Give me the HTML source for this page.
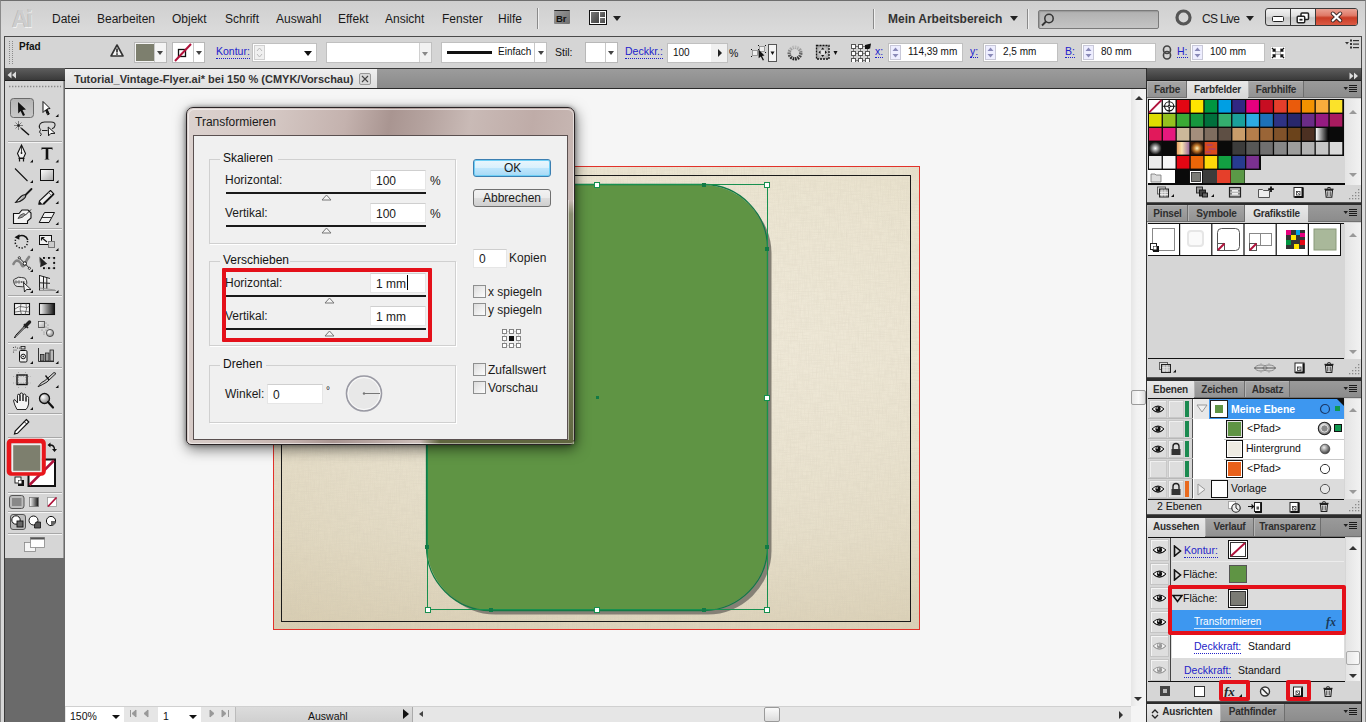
<!DOCTYPE html>
<html><head><meta charset="utf-8">
<style>
*{margin:0;padding:0;box-sizing:border-box}
html,body{width:1366px;height:722px;overflow:hidden;background:#d8d8d8;font-family:"Liberation Sans",sans-serif;font-size:12px;color:#1a1a1a}
.a{position:absolute}
.t{position:absolute;white-space:nowrap;line-height:1}
</style></head><body>
<!-- window frame -->
<div class="a" style="left:0;top:0;width:1366px;height:722px;background:linear-gradient(#cfcfcf,#dadada 30px,#d6d6d6);border-top:1px solid #6e6e6e;border-left:1px solid #8a8a8a;border-right:1px solid #8a8a8a"></div>

<!-- MENUBAR -->
<div id="menubar">
<div class="t" style="left:12px;top:6px;font:bold 23px 'Liberation Sans';color:#cdcdcd;letter-spacing:-2px;text-shadow:-0.5px -0.5px 0 #b0b0b0,0.5px 0.5px 0 #f2f2f2">Ai</div>
<div class="t" style="left:52px;top:13px">Datei</div>
<div class="t" style="left:97px;top:13px">Bearbeiten</div>
<div class="t" style="left:172px;top:13px">Objekt</div>
<div class="t" style="left:225px;top:13px">Schrift</div>
<div class="t" style="left:276px;top:13px">Auswahl</div>
<div class="t" style="left:338px;top:13px">Effekt</div>
<div class="t" style="left:385px;top:13px">Ansicht</div>
<div class="t" style="left:442px;top:13px">Fenster</div>
<div class="t" style="left:498px;top:13px">Hilfe</div>
<div class="a" style="left:537px;top:8px;width:1px;height:21px;background:#8a8a8a;box-shadow:1px 0 0 #f0f0f0"></div>
<div class="a" style="left:554px;top:10px;width:16px;height:14px;background:linear-gradient(135deg,#9a9a9a,#6e6e6e);border-top:1px solid #222;border-radius:1px"></div>
<div class="t" style="left:556px;top:13px;font:bold 9.5px 'Liberation Sans';color:#111">Br</div>
<svg class="a" style="left:589px;top:10px" width="18" height="15"><rect x="0.5" y="0.5" width="17" height="14" fill="#fff" stroke="#111"/><defs><linearGradient id="lyg" x1="0" y1="0" x2="1" y2="1"><stop offset="0" stop-color="#777"/><stop offset="1" stop-color="#444"/></linearGradient></defs><rect x="2" y="2" width="8" height="11" fill="url(#lyg)"/><rect x="11" y="2" width="5" height="5" fill="url(#lyg)"/><rect x="11" y="8" width="5" height="5" fill="url(#lyg)"/></svg>
<div class="a" style="left:613px;top:16px;width:0;height:0;border-left:4px solid transparent;border-right:4px solid transparent;border-top:5px solid #222"></div>
<div class="a" style="left:873px;top:9px;width:1px;height:20px;background:#8a8a8a;box-shadow:1px 0 0 #f0f0f0"></div>
<div class="t" style="left:888px;top:13px;font-weight:bold;color:#333">Mein Arbeitsbereich</div>
<div class="a" style="left:1010px;top:16px;width:0;height:0;border-left:4px solid transparent;border-right:4px solid transparent;border-top:5px solid #222"></div>
<div class="a" style="left:1027px;top:9px;width:1px;height:20px;background:#8a8a8a;box-shadow:1px 0 0 #f0f0f0"></div>
<div class="a" style="left:1038px;top:10px;width:121px;height:19px;background:linear-gradient(#b0b0b0,#c4c4c4);border:1px solid #7a7a7a;border-radius:2px;box-shadow:inset 1px 1px 1px #999"></div>
<svg class="a" style="left:1040px;top:12px" width="16" height="15"><circle cx="9" cy="6.5" r="4.2" fill="none" stroke="#333" stroke-width="1.5"/><line x1="6" y1="9.5" x2="2" y2="13.5" stroke="#333" stroke-width="1.8"/></svg>
<svg class="a" style="left:1175px;top:9px" width="17" height="17"><circle cx="8.5" cy="8.5" r="6.5" fill="none" stroke="#555" stroke-width="3.2"/></svg>
<div class="t" style="left:1202px;top:13px;color:#222;letter-spacing:-0.7px">CS Live</div>
<div class="a" style="left:1246px;top:16px;width:0;height:0;border-left:4px solid transparent;border-right:4px solid transparent;border-top:5px solid #222"></div>
<div class="a" style="left:1265px;top:8px;width:93px;height:18px;border:1px solid #3a3a3a;border-radius:3px;background:linear-gradient(#f2f2f2,#dedede 45%,#c6c6c6 55%,#d8d8d8);overflow:hidden">
 <div class="a" style="left:24px;top:0;width:1px;height:16px;background:#3a3a3a"></div>
 <div class="a" style="left:49px;top:0;width:43px;height:16px;background:linear-gradient(#eaa193,#e07a68 40%,#c93d26 55%,#dc5a44);border-left:1px solid #3a3a3a"></div>
</div>
<div class="a" style="left:1272px;top:16px;width:12px;height:6px;background:#fff;border:1.5px solid #222;border-radius:1.5px"></div>
<svg class="a" style="left:1296px;top:12px" width="14" height="12"><rect x="5" y="1" width="7.5" height="6.5" rx="1" fill="#fff" stroke="#222" stroke-width="1.5"/><rect x="1.2" y="4.2" width="7.5" height="6.5" rx="1" fill="#fff" stroke="#222" stroke-width="1.5"/><rect x="3.5" y="6.8" width="3" height="1.8" fill="#222"/></svg>
<svg class="a" style="left:1329px;top:11px" width="15" height="12"><path d="M3.8 2.5 L11.2 9.5 M11.2 2.5 L3.8 9.5" stroke="#3a2a28" stroke-width="4" stroke-linecap="round"/><path d="M3.8 2.5 L11.2 9.5 M11.2 2.5 L3.8 9.5" stroke="#fff" stroke-width="2.2" stroke-linecap="round"/></svg>
</div>

<!-- CONTROL BAR -->
<div class="a" style="left:4px;top:36px;width:1358px;height:33px;background:#d5d5d5;border-top:1px solid #4a4a4a;border-left:1px solid #4a4a4a;border-right:1px solid #4a4a4a;border-bottom:1px solid #7a7a7a"></div>
<div id="ctrl">
<svg class="a" style="left:8px;top:41px" width="6" height="24"><path d="M1.5 0 V23 M4.5 0 V23" stroke="#8a8a8a" stroke-width="1" stroke-dasharray="1 1"/></svg>
<div class="t" style="left:19px;top:41px;font:bold 10px 'Liberation Sans';color:#111">Pfad</div>
<svg class="a" style="left:110px;top:44px" width="14" height="13"><path d="M7 1 L13 12 L1 12 Z" fill="#f4f4f4" stroke="#333" stroke-width="1.6" stroke-linejoin="round"/><rect x="6.2" y="4.5" width="1.6" height="4" fill="#222"/><rect x="6.2" y="9.3" width="1.6" height="1.5" fill="#222"/></svg>
<div class="a" style="left:134px;top:42px;width:33px;height:21px;background:#f4f4f4;border:1px solid #b8b8b8"></div>
<div class="a" style="left:136px;top:44px;width:18px;height:17px;background:#7d7f6e"></div>
<div class="a" style="left:154px;top:43px;width:1px;height:19px;background:#c8c8c8"></div>
<div class="a" style="left:157px;top:51px;width:0;height:0;border-left:3.5px solid transparent;border-right:3.5px solid transparent;border-top:4px solid #444"></div>
<div class="a" style="left:172px;top:42px;width:33px;height:21px;background:#fff;border:1px solid #b8b8b8"></div>
<svg class="a" style="left:173px;top:43px" width="20" height="19"><rect x="5.5" y="6.5" width="7" height="7" fill="none" stroke="#111" stroke-width="1.3"/><line x1="2" y1="18" x2="18" y2="1" stroke="#b0123b" stroke-width="2"/></svg>
<div class="a" style="left:193px;top:43px;width:1px;height:19px;background:#c8c8c8"></div>
<div class="a" style="left:196px;top:51px;width:0;height:0;border-left:3.5px solid transparent;border-right:3.5px solid transparent;border-top:4px solid #444"></div>
<div class="t" style="left:216px;top:46px;font-size:10.5px;color:#2222cc;border-bottom:1px dotted #2222cc;padding-bottom:1px">Kontur:</div>
<div class="a" style="left:252px;top:43px;width:65px;height:19px;background:#fff;border:1px solid #c0c0c0"></div>
<svg class="a" style="left:254px;top:45px" width="12" height="15"><rect x="0.5" y="0.5" width="10" height="14" fill="#f0f0f0" stroke="#d0d0d0"/><path d="M3 6 L5.5 3 L8 6 M3 9 L5.5 12 L8 9" fill="none" stroke="#bbb"/></svg>
<div class="a" style="left:304px;top:51px;width:0;height:0;border-left:4.5px solid transparent;border-right:4.5px solid transparent;border-top:5px solid #111"></div>
<div class="a" style="left:326px;top:42px;width:106px;height:21px;background:#fff;border:1px solid #c0c0c0"></div>
<div class="a" style="left:419px;top:43px;width:1px;height:19px;background:#d0d0d0"></div>
<div class="a" style="left:420px;top:43px;width:11px;height:19px;background:#f2f2f2"></div>
<div class="a" style="left:422px;top:52px;width:0;height:0;border-left:3.5px solid transparent;border-right:3.5px solid transparent;border-top:4px solid #888"></div>
<div class="a" style="left:441px;top:42px;width:106px;height:21px;background:#fff;border:1px solid #c0c0c0"></div>
<div class="a" style="left:447px;top:51px;width:45px;height:3px;background:#111"></div>
<div class="t" style="left:498px;top:47px;font-size:10px;color:#111">Einfach</div>
<div class="a" style="left:534px;top:43px;width:1px;height:19px;background:#c8c8c8"></div>
<div class="a" style="left:538px;top:51px;width:0;height:0;border-left:3.5px solid transparent;border-right:3.5px solid transparent;border-top:4px solid #444"></div>
<div class="t" style="left:555px;top:47px;font-size:10.5px;color:#111">Stil:</div>
<div class="a" style="left:585px;top:42px;width:33px;height:21px;background:#fff;border:1px solid #b8b8b8"></div>
<div class="a" style="left:605px;top:43px;width:1px;height:19px;background:#c8c8c8"></div>
<div class="a" style="left:608px;top:51px;width:0;height:0;border-left:3.5px solid transparent;border-right:3.5px solid transparent;border-top:4px solid #444"></div>
<div class="t" style="left:625px;top:46px;font-size:10.5px;color:#2222cc;border-bottom:1px dotted #2222cc;padding-bottom:1px">Deckkr.:</div>
<div class="a" style="left:667px;top:43px;width:61px;height:20px;background:#fff;border:1px solid #c0c0c0"></div>
<div class="a" style="left:711px;top:44px;width:16px;height:18px;background:#f0f0f0"></div>
<div class="a" style="left:718px;top:49px;width:0;height:0;border-top:4px solid transparent;border-bottom:4px solid transparent;border-left:4px solid #222"></div>
<div class="t" style="left:673px;top:48px;font-size:10px;color:#111">100</div>
<div class="t" style="left:729px;top:48px;font-size:10.5px;color:#111">%</div>
<svg class="a" style="left:750px;top:43px" width="28" height="20"><g fill="#eee" stroke="#888" stroke-width="0.8"><rect x="2.5" y="7.5" width="5" height="5"/><rect x="9.5" y="3.5" width="5" height="5"/></g><g fill="#111"><rect x="1" y="6" width="1" height="1"/><rect x="8" y="6" width="1" height="1"/><rect x="1" y="13" width="1" height="1"/><rect x="8" y="2" width="1" height="1"/><rect x="15" y="2" width="1" height="1"/><rect x="15" y="9" width="1" height="1"/></g><path d="M8.5 6.5 L14.5 12.5 L12 13 L14 17 L12.8 17.6 L10.8 13.6 L8.7 15.3 Z" fill="#111"/><rect x="18.5" y="1.5" width="8" height="17" fill="#f4f4f4" stroke="#555"/><path d="M20.5 8.5 L24.5 8.5 L22.5 12 Z" fill="#111"/></svg>
<svg class="a" style="left:787px;top:45px" width="16" height="16"><defs><linearGradient id="rcg" x1="0" y1="0" x2="0" y2="1"><stop offset="0" stop-color="#bbb"/><stop offset="1" stop-color="#222"/></linearGradient></defs><circle cx="8" cy="8" r="5.8" fill="none" stroke="url(#rcg)" stroke-width="3.4" stroke-dasharray="1.6 0.8"/><circle cx="8" cy="8" r="3.6" fill="#d8d8d8"/></svg>
<svg class="a" style="left:815px;top:44px" width="24" height="17"><defs><radialGradient id="isg"><stop offset="0" stop-color="#eee"/><stop offset="1" stop-color="#aaa"/></radialGradient></defs><rect x="1.5" y="1.5" width="12.5" height="13.5" fill="url(#isg)" stroke="#111" stroke-width="1.3" stroke-dasharray="2 1"/><path d="M7.7 3.5 L6 5.5 H9.4 Z M7.7 13 L6 11 H9.4 Z M3.5 8.2 L5.5 6.5 V9.9 Z M12 8.2 L10 6.5 V9.9 Z" fill="#111"/><path d="M18.5 7 L22.5 7 L20.5 11 Z" fill="#111"/></svg>
<svg class="a" style="left:850px;top:43px" width="22" height="19"><path d="M3.5 3.5 H17.5 M3.5 10.5 H17.5 M3.5 17.5 H17.5 M3.5 3.5 V17.5 M10.5 3.5 V17.5 M17.5 3.5 V17.5" stroke="#777" stroke-width="1"/><g fill="#fff" stroke="#555" stroke-width="1"><rect x="1.5" y="1.5" width="4" height="4"/><rect x="8.5" y="1.5" width="4" height="4"/><rect x="1.5" y="8.5" width="4" height="4"/><rect x="8.5" y="8.5" width="4" height="4"/><rect x="15.5" y="8.5" width="4" height="4"/><rect x="1.5" y="15.5" width="4" height="4"/><rect x="8.5" y="15.5" width="4" height="4"/><rect x="15.5" y="15.5" width="4" height="4"/></g><path d="M15 2 L21 0.5 L20 6 Z" fill="#111"/><rect x="15" y="2" width="4" height="4" fill="#111"/></svg>
<div class="t" style="left:875px;top:46px;font-size:10.5px;color:#2222cc;border-bottom:1px dotted #2222cc">x:</div>
<div class="a" style="left:888px;top:43px;width:75px;height:19px;background:#fff;border:1px solid #c0c0c0"></div>
<svg class="a" style="left:890px;top:45px" width="12" height="15"><rect x="0.5" y="0.5" width="10" height="14" fill="#eef" stroke="#c8c8d8"/><path d="M2.5 6 L5.5 2.5 L8.5 6 Z M2.5 9 L5.5 12.5 L8.5 9 Z" fill="#8a8ab8"/></svg>
<div class="t" style="left:908px;top:47px;font-size:10px;color:#111">114,39 mm</div>
<div class="t" style="left:970px;top:46px;font-size:10.5px;color:#2222cc;border-bottom:1px dotted #2222cc">y:</div>
<div class="a" style="left:983px;top:43px;width:75px;height:19px;background:#fff;border:1px solid #c0c0c0"></div>
<svg class="a" style="left:985px;top:45px" width="12" height="15"><rect x="0.5" y="0.5" width="10" height="14" fill="#eef" stroke="#c8c8d8"/><path d="M2.5 6 L5.5 2.5 L8.5 6 Z M2.5 9 L5.5 12.5 L8.5 9 Z" fill="#8a8ab8"/></svg>
<div class="t" style="left:1003px;top:47px;font-size:10px;color:#111">2,5 mm</div>
<div class="t" style="left:1065px;top:46px;font-size:10.5px;color:#2222cc;border-bottom:1px dotted #2222cc">B:</div>
<div class="a" style="left:1081px;top:43px;width:75px;height:19px;background:#fff;border:1px solid #c0c0c0"></div>
<svg class="a" style="left:1083px;top:45px" width="12" height="15"><rect x="0.5" y="0.5" width="10" height="14" fill="#eef" stroke="#c8c8d8"/><path d="M2.5 6 L5.5 2.5 L8.5 6 Z M2.5 9 L5.5 12.5 L8.5 9 Z" fill="#8a8ab8"/></svg>
<div class="t" style="left:1101px;top:47px;font-size:10px;color:#111">80 mm</div>
<svg class="a" style="left:1162px;top:45px" width="10" height="15"><rect x="1.5" y="1" width="7" height="7.5" rx="3.5" fill="none" stroke="#444" stroke-width="1.6"/><rect x="1.5" y="6.5" width="7" height="7.5" rx="3.5" fill="none" stroke="#444" stroke-width="1.6"/></svg>
<div class="t" style="left:1177px;top:46px;font-size:10.5px;color:#2222cc;border-bottom:1px dotted #2222cc">H:</div>
<div class="a" style="left:1190px;top:43px;width:75px;height:19px;background:#fff;border:1px solid #c0c0c0"></div>
<svg class="a" style="left:1192px;top:45px" width="12" height="15"><rect x="0.5" y="0.5" width="10" height="14" fill="#eef" stroke="#c8c8d8"/><path d="M2.5 6 L5.5 2.5 L8.5 6 Z M2.5 9 L5.5 12.5 L8.5 9 Z" fill="#8a8ab8"/></svg>
<div class="t" style="left:1210px;top:47px;font-size:10px;color:#111">100 mm</div>
<svg class="a" style="left:1270px;top:46px" width="16" height="14"><rect x="0.5" y="0.5" width="15" height="13" fill="#fff" stroke="#d0d0d0"/><rect x="5.5" y="5.5" width="5" height="3" fill="#ddd" stroke="#aaa" stroke-width="0.8"/><path d="M2 2 L5 5 M5 2.5 V5 H2.5 M14 2 L11 5 M11 2.5 V5 H13.5 M2 12 L5 9 M5 11.5 V9 H2.5 M14 12 L11 9 M11 11.5 V9 H13.5" stroke="#111" stroke-width="1.3" fill="none"/></svg>
<svg class="a" style="left:1345px;top:39px" width="14" height="10"><path d="M0 3 L4 3 L2 5.5 Z" fill="#333"/><rect x="5" y="0.5" width="2" height="2" fill="#333"/><rect x="8" y="1" width="6" height="1.2" fill="#333"/><rect x="5" y="4" width="2" height="2" fill="#333"/><rect x="8" y="4.5" width="6" height="1.2" fill="#333"/><rect x="5" y="7.5" width="2" height="2" fill="#333"/><rect x="8" y="8" width="6" height="1.2" fill="#333"/></svg>
</div>

<!-- TOOLS PANEL -->
<div class="a" style="left:4px;top:68px;width:61px;height:654px;background:#6a6a6a;border-left:1px solid #3a3a3a"></div>
<div class="a" style="left:5px;top:68px;width:60px;height:13px;background:linear-gradient(#5e5e5e,#3a3a3a);border-bottom:1px solid #1e1e1e"></div>
<svg class="a" style="left:7px;top:71px" width="10" height="8"><path d="M4.5 0.5 L0.5 4 L4.5 7.5 Z M9 0.5 L5 4 L9 7.5 Z" fill="#ddd"/></svg>
<div class="a" style="left:5px;top:81px;width:59px;height:477px;background:#d6d6d6;border-right:1px solid #9a9a9a"></div>
<svg class="a" style="left:0;top:0" width="66" height="560">
<defs>
<linearGradient id="gsel" x1="0" y1="0" x2="0" y2="1"><stop offset="0" stop-color="#b4b4b4"/><stop offset="1" stop-color="#c9c9c9"/></linearGradient>
<linearGradient id="grect" x1="0" y1="0" x2="1" y2="1"><stop offset="0" stop-color="#fff"/><stop offset="1" stop-color="#a8a8a8"/></linearGradient>
<linearGradient id="ggrad" x1="0" y1="0" x2="1" y2="0"><stop offset="0" stop-color="#fff"/><stop offset="1" stop-color="#111"/></linearGradient>
<radialGradient id="gball" cx="0.35" cy="0.35" r="0.7"><stop offset="0" stop-color="#fff"/><stop offset="1" stop-color="#888"/></radialGradient>
</defs>

<path d="M9 86.5 H61" stroke="#8a8a8a" stroke-width="1.4" stroke-dasharray="1.4 1.6"/>

<!-- separators -->
<g stroke="#a8a8a8" stroke-width="1"><path d="M8 141.5 H62 M8 228.5 H62 M8 295.5 H62 M8 342.5 H62 M8 367.5 H62 M8 413.5 H62 M8 437.5 H62 M8 492.5 H62 M8 511.5 H62 M8 533.5 H62"/></g>
<g stroke="#f4f4f4" stroke-width="1"><path d="M8 142.5 H62 M8 229.5 H62 M8 296.5 H62 M8 343.5 H62 M8 368.5 H62 M8 414.5 H62 M8 438.5 H62 M8 493.5 H62 M8 512.5 H62 M8 534.5 H62"/></g>
<!-- corner triangles -->
<g fill="#111">
<path d="M58.5 114 L58.5 117 L55.5 117 Z"/>
<path d="M33 159.5 L33 162.5 L30 162.5 Z M58.5 159.5 L58.5 162.5 L55.5 162.5 Z"/>
<path d="M33 180 L33 183 L30 183 Z M58.5 180 L58.5 183 L55.5 183 Z"/>
<path d="M58.5 201 L58.5 204 L55.5 204 Z M58.5 222 L58.5 225 L55.5 225 Z"/>
<path d="M33 248 L33 251 L30 251 Z M58.5 248 L58.5 251 L55.5 251 Z"/>
<path d="M33 269 L33 272 L30 272 Z M33 290 L33 293 L30 293 Z M58.5 290 L58.5 293 L55.5 293 Z"/>
<path d="M33 336 L33 339 L30 339 Z M33 361 L33 364 L30 364 Z M58.5 361 L58.5 364 L55.5 364 Z"/>
<path d="M58.5 385 L58.5 388 L55.5 388 Z M33 407 L33 410 L30 410 Z"/>
</g>
<!-- selection tool selected -->
<rect x="10.5" y="98.5" width="23" height="19" rx="3" fill="url(#gsel)" stroke="#6a6a6a"/>
<path d="M18 102 L26 109.5 L22.5 110 L25 115 L23 116 L20.6 111 L18.2 113.5 Z" fill="#111"/>
<path d="M43 101.5 L50 108.5 L47 109 L49 114 L47.5 114.8 L45.5 110 L43 112.5 Z" fill="#fff" stroke="#111" stroke-width="1"/>
<path d="M46 109.5 L49 114.5" stroke="#111" stroke-width="1.8"/>
<!-- magic wand -->
<path d="M21 128 L29 135" stroke="#111" stroke-width="1.5"/>
<path d="M18.5 121 V130 M14 125.5 H23 M15.5 122.5 L21.5 128.5 M21.5 122.5 L15.5 128.5" stroke="#666" stroke-width="0.8"/>
<circle cx="18.5" cy="125.5" r="1.2" fill="#222"/>
<!-- lasso -->
<path d="M39.5 128 Q38.5 122.5 44.5 122 H51 Q55.5 122 55 125.5 Q54.6 128.2 52 128.8" fill="none" stroke="#222" stroke-width="1.1"/>
<path d="M39.5 128 Q41.5 129.5 40 131 Q38.5 132.5 40.8 133.2 Q42 134.5 40.2 136" fill="none" stroke="#222" stroke-width="1"/>
<path d="M42 130.5 H47.5" stroke="#222" stroke-width="1"/>
<path d="M48.2 127 L55 133.3 L50.8 133.5 L48.6 135.8 Z" fill="#fafafa" stroke="#111" stroke-width="1"/>
<!-- pen -->
<path d="M21.5 145 L25.5 153.5 L23.5 158 H19.5 L17.5 153.5 Z" fill="#f2f2f2" stroke="#111" stroke-width="1.1"/>
<path d="M21.5 146 V152" stroke="#111" stroke-width="0.8"/><circle cx="21.5" cy="153" r="0.9" fill="#111"/>
<path d="M18.5 158.5 H24.5 M19.5 158 V161.5 M23.5 158 V161.5" stroke="#111" stroke-width="1.2"/>
<!-- T -->
<path d="M41.5 147.5 H52.5 V150 L51.5 149 H48.3 V158.8 L49.8 159.6 H44.2 L45.7 158.8 V149 H42.5 L41.5 150 Z" fill="#111"/>
<!-- line -->
<path d="M15 168.5 L27.5 181" stroke="#111" stroke-width="1.1"/>
<!-- rect -->
<rect x="40.5" y="169.5" width="13" height="11" fill="url(#grect)" stroke="#111" stroke-width="1"/>
<!-- brush -->
<path d="M31.5 189 L24 196.5" stroke="#1a1a1a" stroke-width="1.8" stroke-linecap="round"/>
<path d="M25.5 195 Q23.5 194 21 196.5 Q17.5 200 15.5 202.5 Q19.5 202.5 23 199.5 Q26.5 197 25.5 195 Z" fill="#a8a8a8" stroke="#1a1a1a" stroke-width="1.1"/>
<path d="M22.5 197 Q20 199.5 18 201" stroke="#eee" stroke-width="0.8" fill="none"/>
<!-- pencil -->
<path d="M50.5 190.5 L53.8 193.8 L43.5 204 L38.8 204.2 L39.5 200.8 Z" fill="#ececec" stroke="#111" stroke-width="1.1" stroke-linejoin="round"/>
<path d="M53.8 193.8 L43.5 204" stroke="#111" stroke-width="1.8"/>
<path d="M39.5 200.8 L38.8 204.2 L42 204.1 Z" fill="#111"/>
<path d="M48.5 192.5 L51.8 195.8" stroke="#555" stroke-width="0.8"/>
<!-- blob brush -->
<path d="M13.5 213.5 H19 L22 210 H28 L31 213 V218 L27.5 221 V223.5 H13.5 Z" fill="#f2f2f2" stroke="#111" stroke-width="1.1"/>
<path d="M31 209.5 L25 215.5" stroke="#222" stroke-width="1"/>
<path d="M25.5 214.5 Q23 218 18 218.5 Q19.5 214.5 23.5 213.5 Z" fill="#999" stroke="#333" stroke-width="0.8"/>
<!-- eraser -->
<path d="M44.5 212.5 H54.5 L49 222.5 H39.2 Z" fill="#f0f0f0" stroke="#111" stroke-width="1"/>
<path d="M41.5 217.5 H52" stroke="#333"/>
<!-- rotate -->
<path d="M27.5 241 A6.2 6.2 0 1 1 16.5 238" fill="none" stroke="#111" stroke-width="1.5" stroke-dasharray="1.3 1.7"/>
<path d="M18 236.8 A6.2 6.2 0 0 1 27.8 240" fill="none" stroke="#111" stroke-width="1.5"/>
<path d="M14.5 237.2 L19.5 234.2 L19.3 239.8 Z" fill="#111"/>
<!-- scale -->
<rect x="39.5" y="235.5" width="12" height="9" fill="#f2f2f2" stroke="#111"/>
<rect x="48.5" y="241.5" width="6" height="6" fill="#ccc" stroke="#777"/>
<path d="M41.5 237.5 L47 242 M41.5 237.5 H44.5 M41.5 237.5 V240.5" stroke="#111" stroke-width="1.2"/>
<!-- warp -->
<path d="M13.5 264 Q15.5 259.5 18.5 261 Q21 262.5 22 265.5 Q23 267.5 25 264 Q27 259 29 257" fill="none" stroke="#7a7a7a" stroke-width="2.6" stroke-linecap="round" opacity="0.9"/>
<path d="M19.5 258 L30 268.8" stroke="#111" stroke-width="0.9"/>
<circle cx="19.3" cy="257.8" r="1.1" fill="#fff" stroke="#111" stroke-width="0.8"/>
<circle cx="24.8" cy="263.5" r="1.7" fill="#fff" stroke="#111" stroke-width="1"/>
<circle cx="29.4" cy="268.3" r="1.1" fill="#fff" stroke="#111" stroke-width="0.8"/>
<!-- free transform -->
<path d="M43.7 257.8 H54.2 V268.2 H43.7" fill="none" stroke="#777" stroke-width="0.6" stroke-dasharray="1 1"/>
<g fill="#111"><rect x="43" y="257" width="1.9" height="1.9"/><rect x="48" y="257" width="1.9" height="1.9"/><rect x="53.2" y="257" width="1.9" height="1.9"/><rect x="53.2" y="262" width="1.9" height="1.9"/><rect x="53.2" y="267.2" width="1.9" height="1.9"/><rect x="48" y="267.2" width="1.9" height="1.9"/><rect x="43" y="267.2" width="1.9" height="1.9"/></g>
<path d="M39.5 256.8 L47.2 263.8 L40.2 267.2 Z" fill="#222"/>
<path d="M39.5 256.8 L41 264 L40.2 267.2 Z" fill="#777"/>
<!-- symbol sprayer -->
<path d="M14 283 Q12.5 279 16 278.5 Q18 276.5 21.5 277.5 Q25.5 277 26.5 280.5 Q28 283.5 25 285.5 Q23 287.5 19 286.5 Q15 287 14 283 Z" fill="#e6e6e6" stroke="#222" stroke-width="0.9"/>
<g fill="#fff" stroke="#111" stroke-width="0.6"><circle cx="16" cy="282" r="1.1"/><circle cx="19" cy="282" r="1.1"/></g><g fill="#111"><circle cx="21.8" cy="282" r="0.8"/><circle cx="23.8" cy="282" r="0.8"/></g>
<path d="M23.5 282.5 L31 289.5 L26.5 289.5 L24.5 292 Z" fill="#f4f4f4" stroke="#111" stroke-width="0.9"/>
<!-- graph perspective grid -->
<defs><linearGradient id="pgg" x1="0" y1="0" x2="0" y2="1"><stop offset="0" stop-color="#fff"/><stop offset="1" stop-color="#ccc"/></linearGradient></defs>
<path d="M39.5 275.5 L50 278.5 V288 L39.5 290.5 Z" fill="url(#pgg)"/>
<path d="M39.5 275 V290.5 M43.5 276.3 V289.5 M46.8 277.3 V288.7 M39.5 275.5 L50 278.5 M39.5 282.8 L50 283.3" fill="none" stroke="#222" stroke-width="1"/>
<path d="M39.5 290.5 H56 M39.5 288 L55 290" stroke="#888" stroke-width="0.8"/>
<!-- mesh -->
<rect x="14.5" y="303.5" width="15" height="11" fill="#f4f4f4" stroke="#111" stroke-width="1.1"/>
<path d="M15 309 Q19 305 24 307 Q27 309 29.5 306 M21 303.5 Q19 309 21.5 314.5 M26 303.5 Q27.5 309 25 314.5 M15 312 Q22 310 29.5 312" fill="none" stroke="#555" stroke-width="0.8"/>
<!-- gradient -->
<rect x="39.5" y="303.5" width="15" height="11" fill="url(#ggrad)" stroke="#111" stroke-width="1.1"/>
<!-- eyedropper -->
<path d="M29.5 322 L25 326.5" stroke="#222" stroke-width="3.5" stroke-linecap="round"/>
<path d="M24 324 L28 328" stroke="#222" stroke-width="1.6"/>
<path d="M25.5 327 L16 336.5 L14.5 338 L15.5 335.5 L24.5 326 Z" fill="#f4f4f4" stroke="#111" stroke-width="1"/>
<!-- blend -->
<rect x="38.5" y="321.5" width="6" height="6" fill="url(#grect)" stroke="#444" stroke-width="0.8"/>
<g fill="#777"><circle cx="46" cy="323" r="0.6"/><circle cx="48" cy="325" r="0.6"/><circle cx="46" cy="327" r="0.6"/><circle cx="42" cy="330" r="0.6"/><circle cx="44" cy="332" r="0.6"/><circle cx="46" cy="330" r="0.6"/><circle cx="48" cy="328" r="0.6"/><circle cx="44" cy="334" r="0.6"/></g>
<circle cx="50" cy="333" r="3.6" fill="url(#gball)" stroke="#333" stroke-width="0.8"/>
<!-- spray -->
<g fill="#333"><circle cx="13.5" cy="347.5" r="0.6"/><circle cx="15.5" cy="347" r="0.6"/><circle cx="17.5" cy="348" r="0.6"/><circle cx="14" cy="350" r="0.6"/><circle cx="16" cy="350" r="0.6"/><circle cx="13.5" cy="352" r="0.6"/><circle cx="19.5" cy="348" r="0.6"/></g>
<rect x="21" y="346.5" width="4" height="2.5" fill="#ddd" stroke="#111" stroke-width="0.8"/>
<rect x="19.5" y="350.5" width="7.5" height="11.5" rx="1.2" fill="#eee" stroke="#111" stroke-width="1"/>
<circle cx="23.2" cy="356.5" r="2.3" fill="none" stroke="#111"/><circle cx="23.2" cy="356.5" r="0.8" fill="#111"/>
<!-- graph -->
<path d="M38.5 348 V361.5 H54" stroke="#222" fill="none" stroke-width="0.9"/>
<rect x="40.5" y="354.5" width="3.5" height="6.5" fill="#888" stroke="#222" stroke-width="0.8"/>
<rect x="45.5" y="353" width="3.5" height="8" fill="#999" stroke="#222" stroke-width="0.8"/>
<rect x="50" y="350" width="3.5" height="11" fill="#bbb" stroke="#222" stroke-width="0.8"/>
<!-- artboard -->
<rect x="17" y="375" width="10" height="9.5" fill="none" stroke="#111" stroke-width="1.4"/>
<path d="M13 376.5 H31 M13 383 H31 M18.5 372 V388 M25.5 372 V388" stroke="#888" stroke-width="0.6" stroke-dasharray="1 1.5"/>
<!-- slice -->
<path d="M56 373.5 L47 382 Q42 385 38 386.8 Q41 382 45 380.5 L54 372.5 Z" fill="#ccc" stroke="#222" stroke-width="1"/>
<path d="M45.5 375.5 L49 380" stroke="#111" stroke-width="1.3"/>
<!-- hand -->
<path d="M17 409.5 Q14.5 405 13.6 401 Q13.5 399.3 15 399.8 L17.5 403 V395.5 Q17.5 394 19 394.2 Q20 394.5 20 396 V401 V394 Q20.5 392.5 22 393 Q23 393.3 23 395 V401 V395 Q23.5 393.8 24.8 394 Q26 394.4 26 396 V401.5 V397.5 Q26.5 396 27.8 396.4 Q28.8 396.8 28.6 398.5 V404 Q28 407.5 26 409.5 Z" fill="#f4f4f4" stroke="#111" stroke-width="0.9"/>
<!-- zoom -->
<circle cx="44.5" cy="398.5" r="5" fill="url(#gball)" stroke="#111" stroke-width="1.3"/>
<path d="M48 402 L53 407.5" stroke="#111" stroke-width="2.2" stroke-linecap="round"/>
<!-- edit pencil -->
<path d="M26.3 419.5 L28.8 422 L17.5 433.3 L14.5 434 L15.2 431 Z" fill="#fff" stroke="#111" stroke-width="1.2"/>
<path d="M24.2 421.6 L26.7 424.1" stroke="#111" stroke-width="0.9"/>
<!-- fill/stroke -->
<rect x="28.5" y="459.5" width="26.5" height="26.5" fill="#fff" stroke="#111" stroke-width="2"/>
<path d="M29.5 485 L54 460.5" stroke="#b0123b" stroke-width="2.5"/>
<rect x="9" y="441" width="34.5" height="32.5" rx="2" fill="none" stroke="#e8161b" stroke-width="4.6"/>
<rect x="12.5" y="444.5" width="28.5" height="27" fill="#7d7f6e" stroke="#f0f0f0" stroke-width="1.4"/>
<path d="M50 445 Q54.5 445 54.5 449.5" fill="none" stroke="#111" stroke-width="1.3"/><path d="M47.5 445 L50.5 442.5 V447.5 Z M54.5 452 L52 449 H57 Z" fill="#111"/>
<rect x="15" y="477" width="6" height="6" fill="#fff" stroke="#111" stroke-width="0.9"/>
<rect x="18" y="480" width="6" height="6" fill="#111"/>
<rect x="18.5" y="480.5" width="3" height="3" fill="#fff"/>
<!-- color modes -->
<rect x="9.5" y="495.5" width="14.5" height="13" rx="2.5" fill="#bcbcbc" stroke="#555"/>
<rect x="12" y="498" width="9.5" height="8" fill="#888"/>
<rect x="29.5" y="497.5" width="9" height="9" fill="url(#ggrad)" stroke="#777" stroke-width="0.8"/>
<rect x="47.5" y="497.5" width="9" height="9" fill="#fff" stroke="#999" stroke-width="0.8"/>
<path d="M48 506.5 L56.5 497.5" stroke="#b0123b" stroke-width="1.8"/>
<!-- draw modes -->
<rect x="10.5" y="514.5" width="15" height="15" rx="2.5" fill="#bcbcbc" stroke="#555"/>
<circle cx="16" cy="520" r="4.2" fill="#fff" stroke="#111" stroke-width="1"/>
<rect x="17" y="521" width="6" height="6" fill="#666" stroke="#111" stroke-width="0.9"/>
<circle cx="33.5" cy="520.5" r="4.5" fill="#fff" stroke="#111" stroke-width="1"/>
<path d="M34.5 525 L36 522 H40.5 V528 H34.5 Z" fill="#555" stroke="#111" stroke-width="0.8"/>
<circle cx="51" cy="521" r="4.6" fill="#fff" stroke="#111" stroke-width="1"/>
<path d="M51 521 H55.5 A4.5 4.5 0 0 1 51 525.5 Z" fill="#666"/>
<!-- screen mode -->
<rect x="24.5" y="542.5" width="11" height="9" fill="#f6f6f6" stroke="#888" stroke-width="0.8"/>
<rect x="30.5" y="537.5" width="14" height="10" fill="#fff" stroke="#888" stroke-width="0.8"/>
<rect x="30.5" y="537.5" width="14" height="2" fill="#555"/>
</svg>

<!-- DOC TAB BAR -->
<div class="a" style="left:65px;top:68px;width:1082px;height:21px;background:linear-gradient(#9c9c9c,#8a8a8a);border-top:1px solid #3a3a3a;border-bottom:1px solid #2a2a2a"></div>
<div class="a" style="left:65px;top:69px;width:312px;height:19px;background:linear-gradient(#f0f0f0,#dedede)"></div>
<div class="t" style="left:74px;top:73px;font:bold 11px 'Liberation Sans';color:#333">Tutorial_Vintage-Flyer.ai* bei 150 % (CMYK/Vorschau)</div>
<svg class="a" style="left:359px;top:73px" width="12" height="12"><rect x="0.5" y="0.5" width="11" height="11" rx="1.5" fill="#d8d8d8" stroke="#999"/><path d="M3 3 L9 9 M9 3 L3 9" stroke="#444" stroke-width="1.1"/></svg>

<!-- CANVAS -->
<div class="a" style="left:65px;top:89px;width:1066px;height:617px;background:#f6f6f6"></div>
<!-- bleed + artboard -->
<div class="a" style="left:273px;top:166px;width:647px;height:464px;border:1px solid #e2322a;background:#e4dcc6"></div>
<div class="a" style="left:274px;top:167px;width:645px;height:462px;background:radial-gradient(ellipse 80% 85% at 62% 38%,rgba(245,240,226,0.55) 0%,rgba(240,234,218,0.25) 50%,rgba(200,185,150,0.18) 100%),linear-gradient(#e9e2cd,#ebe4d1 40%,#e4dcc6 80%,#dcd2b9)"></div>
<svg class="a" style="left:274px;top:167px;opacity:0.5" width="645" height="462"><defs><filter id="lin" x="0" y="0" width="100%" height="100%"><feTurbulence type="fractalNoise" baseFrequency="0.9 0.08" numOctaves="2" seed="3" result="n1"/><feColorMatrix in="n1" type="matrix" values="0 0 0 0 0.55  0 0 0 0 0.5  0 0 0 0 0.4  0 0 0 -1.6 1.0" result="c1"/><feTurbulence type="fractalNoise" baseFrequency="0.08 0.9" numOctaves="2" seed="7" result="n2"/><feColorMatrix in="n2" type="matrix" values="0 0 0 0 0.55  0 0 0 0 0.5  0 0 0 0 0.4  0 0 0 -1.6 1.0" result="c2"/><feMerge><feMergeNode in="c1"/><feMergeNode in="c2"/></feMerge></filter></defs><rect width="645" height="462" filter="url(#lin)" opacity="0.4"/></svg>
<div class="a" style="left:281px;top:175px;width:630px;height:447px;border:1px solid #1a1a1a"></div>
<!-- shape shadow + shape -->
<svg class="a" style="left:0;top:0" width="1131" height="706">
<rect x="431.5" y="189.5" width="340" height="425" rx="64" ry="64" fill="#858075"/>
<rect x="427" y="185" width="340" height="425" rx="64" ry="64" fill="#5f9444"/>
<path d="M491 610.5 H704 A64 64 0 0 0 767.5 546 V249 A64 64 0 0 0 704 184.5 H491 A64 64 0 0 0 426.5 249 V546 A64 64 0 0 0 491 610.5 Z" fill="none" stroke="#127a45" stroke-width="1.3"/>
<path d="M427.5 547 V184.5 H767.5 V609.5 H427.5 Z" fill="none" stroke="#17904f" stroke-width="1"/>
<g fill="#fff" stroke="#17904f" stroke-width="1"><rect x="425.5" y="182.5" width="5" height="5"/><rect x="594.5" y="182.5" width="5" height="5"/><rect x="764.5" y="182.5" width="5" height="5"/><rect x="764.5" y="395.5" width="5" height="5"/><rect x="764.5" y="607.5" width="5" height="5"/><rect x="594.5" y="607.5" width="5" height="5"/><rect x="425.5" y="607.5" width="5" height="5"/><rect x="425.5" y="395.5" width="5" height="5"/></g>
<g fill="#127a45"><rect x="702" y="183" width="4" height="4"/><rect x="765" y="247" width="4" height="4"/><rect x="765" y="545" width="4" height="4"/><rect x="702" y="608" width="4" height="4"/><rect x="489" y="608" width="4" height="4"/><rect x="425" y="545" width="4" height="4"/><rect x="596" y="396" width="3" height="3"/></g>
</svg>
<!-- v scrollbar -->
<div class="a" style="left:1131px;top:89px;width:15px;height:617px;background:linear-gradient(90deg,#e6e6e6,#f2f2f2 40%,#f4f4f4)"></div>
<div class="a" style="left:1135px;top:96px;width:0;height:0;border-left:4px solid transparent;border-right:4px solid transparent;border-bottom:4px solid #333"></div>
<div class="a" style="left:1134px;top:697px;width:0;height:0;border-left:4px solid transparent;border-right:4px solid transparent;border-top:4px solid #333"></div>
<div class="a" style="left:1131px;top:390px;width:15px;height:15px;background:linear-gradient(90deg,#e6e6e6,#fafafa 50%,#dcdcdc);border:1px solid #9a9a9a;border-radius:2px"></div>
<!-- status bar -->
<div class="a" style="left:65px;top:706px;width:1066px;height:16px;background:#e6e6e6;border-top:1px solid #d0d0d0"></div>
<div class="a" style="left:66px;top:707px;width:58px;height:15px;background:#fff"></div>
<div class="t" style="left:70px;top:711px;font-size:10.5px;color:#111">150%</div>
<div class="a" style="left:112px;top:715px;width:0;height:0;border-left:4px solid transparent;border-right:4px solid transparent;border-top:4px solid #111"></div>
<svg class="a" style="left:128px;top:708px" width="30" height="14"><path d="M2.5 2 V9 M8 2 L4 5.5 L8 9 Z M20 2 L16 5.5 L20 9 Z" stroke="#999" fill="#999"/></svg>
<div class="a" style="left:158px;top:707px;width:43px;height:15px;background:#fff"></div>
<div class="t" style="left:163px;top:711px;font-size:10.5px;color:#111">1</div>
<div class="a" style="left:189px;top:715px;width:0;height:0;border-left:4px solid transparent;border-right:4px solid transparent;border-top:4px solid #111"></div>
<svg class="a" style="left:206px;top:708px" width="26" height="14"><path d="M4 2 L8 5.5 L4 9 Z M16 2 L20 5.5 L16 9 Z M22.5 2 V9" stroke="#999" fill="#999"/></svg>
<div class="a" style="left:235px;top:707px;width:178px;height:15px;background:linear-gradient(#dcdcdc,#d0d0d0);border-left:1px solid #bbb;border-right:1px solid #aaa"></div>
<div class="t" style="left:308px;top:711px;font-size:10.5px;color:#111">Auswahl</div>
<div class="a" style="left:403px;top:709px;width:0;height:0;border-top:5px solid transparent;border-bottom:5px solid transparent;border-left:6px solid #111"></div>
<div class="a" style="left:419px;top:711px;width:0;height:0;border-top:3.5px solid transparent;border-bottom:3.5px solid transparent;border-right:4px solid #444"></div>
<div class="a" style="left:764px;top:707px;width:16px;height:15px;background:linear-gradient(#fafafa,#dcdcdc);border:1px solid #9a9a9a;border-radius:2px"></div>
<div class="a" style="left:1119px;top:711px;width:0;height:0;border-top:4px solid transparent;border-bottom:4px solid transparent;border-left:4px solid #333"></div>
<div class="a" style="left:1131px;top:706px;width:15px;height:16px;background:#f4f4f4"></div>

<!-- DIALOG -->
<div class="a" style="left:186px;top:107px;width:389px;height:338px;border-radius:7px 7px 5px 5px;box-shadow:1px 4px 14px rgba(0,0,0,0.55),0 0 4px rgba(0,0,0,0.4);background:linear-gradient(100deg,#dcd2cf 0%,#d4c7c3 20%,#c4b2ae 36%,#a99591 46%,#b5a39f 54%,#c9bab6 64%,#bfaca8 78%,#c8b8b4 90%,#bca9a4 100%);border:1.5px solid #2a2426"></div>
<div class="a" style="left:187.5px;top:108.5px;width:386px;height:335px;border-radius:6px 6px 4px 4px;border:1px solid rgba(255,255,255,0.55)"></div>
<div class="a" style="left:568px;top:200px;width:5.5px;height:243.5px;background:linear-gradient(rgba(130,136,104,0),rgba(130,136,104,0.9) 14px,#7c8262 50%,#60663f);box-shadow:inset 1px 0 0 rgba(255,255,255,0.5),inset -1px 0 0 rgba(255,255,255,0.45)"></div>
<div class="a" style="left:420px;top:440px;width:153.5px;height:3.5px;background:linear-gradient(90deg,rgba(96,102,63,0),#60663f 20px);border-radius:0 0 3px 0;box-shadow:inset 0 -1px 0 rgba(255,255,255,0.45)"></div>
<div class="t" style="left:195px;top:116px;font-size:12px;color:#1a1a1a">Transformieren</div>
<div class="a" style="left:193px;top:135px;width:375px;height:305px;background:#f0f0f0;border:1px solid #5a5050"></div>
<!-- groups -->
<div class="a" style="left:209px;top:159px;width:247px;height:85px;border:1px solid #d0d0d0;box-shadow:1px 1px 0 #fff"></div>
<div class="a" style="left:220px;top:154px;width:58px;height:10px;background:#f0f0f0"></div>
<div class="t" style="left:223px;top:152px;font-size:12px;color:#111">Skalieren</div>
<div class="t" style="left:225px;top:174px">Horizontal:</div>
<div class="a" style="left:370px;top:170px;width:56px;height:20px;background:#fff;border:1px solid #e6e6e6;border-top-color:#cfcfcf"></div>
<div class="t" style="left:376px;top:175px">100</div>
<div class="t" style="left:430px;top:175px">%</div>
<div class="a" style="left:226px;top:192px;width:200px;height:2px;background:#1a1a1a"></div>
<svg class="a" style="left:321px;top:194px" width="11" height="7"><path d="M1 6 L5.5 1 L10 6 Z" fill="#f4f4f4" stroke="#777"/></svg>
<div class="t" style="left:225px;top:207px">Vertikal:</div>
<div class="a" style="left:370px;top:203px;width:56px;height:20px;background:#fff;border:1px solid #e6e6e6;border-top-color:#cfcfcf"></div>
<div class="t" style="left:376px;top:208px">100</div>
<div class="t" style="left:430px;top:208px">%</div>
<div class="a" style="left:226px;top:225px;width:200px;height:2px;background:#1a1a1a"></div>
<svg class="a" style="left:321px;top:227px" width="11" height="7"><path d="M1 6 L5.5 1 L10 6 Z" fill="#f4f4f4" stroke="#777"/></svg>

<div class="a" style="left:209px;top:261px;width:247px;height:85px;border:1px solid #d0d0d0;box-shadow:1px 1px 0 #fff"></div>
<div class="a" style="left:220px;top:256px;width:70px;height:10px;background:#f0f0f0"></div>
<div class="t" style="left:223px;top:254px;font-size:12px;color:#111">Verschieben</div>
<div class="t" style="left:225px;top:277px">Horizontal:</div>
<div class="a" style="left:370px;top:273px;width:56px;height:20px;background:#fff;border:1px solid #e6e6e6;border-top-color:#cfcfcf"></div>
<div class="t" style="left:376px;top:278px">1 mm</div>
<div class="a" style="left:407px;top:275px;width:1px;height:15px;background:#000"></div>
<div class="a" style="left:226px;top:295px;width:200px;height:2px;background:#1a1a1a"></div>
<svg class="a" style="left:324px;top:297px" width="11" height="7"><path d="M1 6 L5.5 1 L10 6 Z" fill="#f4f4f4" stroke="#777"/></svg>
<div class="t" style="left:225px;top:310px">Vertikal:</div>
<div class="a" style="left:370px;top:306px;width:56px;height:20px;background:#fff;border:1px solid #e6e6e6;border-top-color:#cfcfcf"></div>
<div class="t" style="left:376px;top:311px">1 mm</div>
<div class="a" style="left:226px;top:328px;width:200px;height:2px;background:#1a1a1a"></div>
<svg class="a" style="left:324px;top:330px" width="11" height="7"><path d="M1 6 L5.5 1 L10 6 Z" fill="#f4f4f4" stroke="#777"/></svg>
<div class="a" style="left:222px;top:268px;width:210px;height:74px;border:4px solid #e4101a;border-radius:1px"></div>

<div class="a" style="left:209px;top:365px;width:247px;height:58px;border:1px solid #d0d0d0;box-shadow:1px 1px 0 #fff"></div>
<div class="a" style="left:220px;top:360px;width:46px;height:10px;background:#f0f0f0"></div>
<div class="t" style="left:223px;top:358px;font-size:12px;color:#111">Drehen</div>
<div class="t" style="left:225px;top:388px">Winkel:</div>
<div class="a" style="left:267px;top:384px;width:56px;height:20px;background:#fff;border:1px solid #e6e6e6;border-top-color:#cfcfcf"></div>
<div class="t" style="left:273px;top:389px">0</div>
<div class="t" style="left:326px;top:386px;font-size:10px">°</div>
<svg class="a" style="left:344px;top:374px" width="40" height="40"><circle cx="20" cy="19.5" r="17.5" fill="#e8e8e8" stroke="#9a9aa4" stroke-width="1.6"/><circle cx="20" cy="19.5" r="16" fill="none" stroke="#fafafa" stroke-width="1"/><path d="M20 19.5 H36" stroke="#777" stroke-width="1"/><circle cx="20" cy="19.5" r="1.2" fill="#777"/></svg>

<!-- buttons -->
<div class="a" style="left:473px;top:159px;width:78px;height:18px;border:1px solid #3c7fb1;border-radius:3px;background:linear-gradient(#eaf6fd,#d9f0fc 50%,#bee6fd 51%,#a7d9f5);box-shadow:inset 0 0 0 1px #6ecff6"></div>
<div class="t" style="left:504px;top:162px">OK</div>
<div class="a" style="left:473px;top:189px;width:78px;height:18px;border:1px solid #707070;border-radius:3px;background:linear-gradient(#f2f2f2,#ebebeb 50%,#dddddd 51%,#cfcfcf)"></div>
<div class="t" style="left:483px;top:192px">Abbrechen</div>
<div class="a" style="left:473px;top:249px;width:34px;height:19px;background:#fff;border:1px solid #e6e6e6;border-top-color:#cfcfcf"></div>
<div class="t" style="left:479px;top:253px">0</div>
<div class="t" style="left:509px;top:252px">Kopien</div>
<div class="a" style="left:473px;top:285px;width:13px;height:13px;border:1px solid #8e8f8f;background:linear-gradient(135deg,#dcdcdc,#fdfdfd)"></div>
<div class="t" style="left:488px;top:286px">x spiegeln</div>
<div class="a" style="left:473px;top:303px;width:13px;height:13px;border:1px solid #8e8f8f;background:linear-gradient(135deg,#dcdcdc,#fdfdfd)"></div>
<div class="t" style="left:488px;top:304px">y spiegeln</div>
<svg class="a" style="left:502px;top:329px" width="20" height="20"><g fill="#fff" stroke="#777" stroke-width="0.9"><rect x="0.5" y="0.5" width="4" height="4"/><rect x="7.5" y="0.5" width="4" height="4"/><rect x="14.5" y="0.5" width="4" height="4"/><rect x="0.5" y="7.5" width="4" height="4"/><rect x="14.5" y="7.5" width="4" height="4"/><rect x="0.5" y="14.5" width="4" height="4"/><rect x="7.5" y="14.5" width="4" height="4"/><rect x="14.5" y="14.5" width="4" height="4"/></g><rect x="7" y="7" width="5" height="5" fill="#111"/><path d="M4.5 2.5 H7.5 M11.5 2.5 H14.5 M2.5 4.5 V7.5 M2.5 11.5 V14.5 M16.5 4.5 V7.5 M16.5 11.5 V14.5 M4.5 16.5 H7.5 M11.5 16.5 H14.5" stroke="#999" stroke-width="0.8" stroke-dasharray="1 1"/></svg>
<div class="a" style="left:473px;top:363px;width:13px;height:13px;border:1px solid #8e8f8f;background:linear-gradient(135deg,#dcdcdc,#fdfdfd)"></div>
<div class="t" style="left:488px;top:364px">Zufallswert</div>
<div class="a" style="left:473px;top:381px;width:13px;height:13px;border:1px solid #8e8f8f;background:linear-gradient(135deg,#dcdcdc,#fdfdfd)"></div>
<div class="t" style="left:488px;top:382px">Vorschau</div>

<!-- RIGHT PANELS -->
<div class="a" style="left:1146px;top:68px;width:216px;height:654px;background:#d6d6d6;border-left:1px solid #2e2e2e;border-right:1px solid #2e2e2e"></div>
<div class="a" style="left:1147px;top:68px;width:214px;height:13px;background:linear-gradient(#5e5e5e,#3a3a3a);border-bottom:1px solid #1e1e1e"></div>
<svg class="a" style="left:1349px;top:72px" width="10" height="8"><path d="M0.5 0.5 L4.5 4 L0.5 7.5 Z M5 0.5 L9 4 L5 7.5 Z" fill="#ddd"/></svg>
<div class="a" style="left:1147px;top:81px;width:214px;height:17px;background:linear-gradient(#9a9a9a,#8c8c8c);border-bottom:1px solid #707070"></div>
<div class="a" style="left:1147px;top:81px;width:40px;height:16px;background:linear-gradient(#a6a6a6,#929292);border-right:1px solid #6e6e6e;box-shadow:inset 1px 1px 0 #b4b4b4"></div>
<div class="t" style="left:1147px;width:40px;text-align:center;top:84px;font:bold 10px 'Liberation Sans';color:#2e2e2e;letter-spacing:-0.2px">Farbe</div>
<div class="a" style="left:1187px;top:81px;width:61px;height:17px;background:linear-gradient(#e8e8e8,#d8d8d8)"></div>
<div class="t" style="left:1187px;width:61px;text-align:center;top:84px;font:bold 10px 'Liberation Sans';color:#2e2e2e;letter-spacing:-0.2px">Farbfelder</div>
<div class="a" style="left:1248px;top:81px;width:56px;height:16px;background:linear-gradient(#a6a6a6,#929292);border-right:1px solid #6e6e6e;box-shadow:inset 1px 1px 0 #b4b4b4"></div>
<div class="t" style="left:1248px;width:56px;text-align:center;top:84px;font:bold 10px 'Liberation Sans';color:#2e2e2e;letter-spacing:-0.2px">Farbhilfe</div>
<svg class="a" style="left:1343px;top:85px" width="15" height="10"><path d="M0.5 2 L5 2 L2.75 5 Z" fill="#222"/><g fill="#1a1a1a"><rect x="6" y="0" width="8" height="1"/><rect x="6" y="2" width="8" height="1"/><rect x="6" y="4" width="8" height="1"/><rect x="6" y="6" width="8" height="1"/></g></svg>
<div class="a" style="left:1147px;top:98px;width:214px;height:104px;background:#d6d6d6"></div>
<div class="a" style="left:1148px;top:99px;width:197px;height:86px;background:#d8d8d8;border-top:1px solid #111;border-bottom:2px solid #111"></div>
<svg class="a" style="left:1148px;top:99px" width="197" height="86"><defs><linearGradient id="sg1" x1="0" x2="1"><stop offset="0" stop-color="#fff"/><stop offset="1" stop-color="#000"/></linearGradient><linearGradient id="sg2" x1="0" x2="1"><stop offset="0" stop-color="#e9a060"/><stop offset="0.4" stop-color="#f8e2b0"/><stop offset="1" stop-color="#9a6a9e"/></linearGradient><radialGradient id="sr1"><stop offset="0" stop-color="#fff"/><stop offset="1" stop-color="#111"/></radialGradient><radialGradient id="sr2"><stop offset="0" stop-color="#fff3c0"/><stop offset="0.5" stop-color="#c0782a"/><stop offset="1" stop-color="#3a1a08"/></radialGradient></defs><rect x="0" y="0" width="197" height="85" fill="#d6d6d6"/><rect x="0" y="0" width="196" height="57" fill="#0a0a0a"/><rect x="0" y="56" width="113" height="15" fill="#0a0a0a"/><rect x="0" y="70" width="97" height="15" fill="#0a0a0a"/><rect x="1.0" y="1" width="12.6" height="12.6" fill="#fff"/><path d="M1.0 13.6 L13.6 1" stroke="#b0123b" stroke-width="1.8"/><rect x="14.9" y="1" width="12.6" height="12.6" fill="#fff"/><circle cx="21.2" cy="7.3" r="4.6" fill="none" stroke="#111" stroke-width="1.1"/><path d="M21.2 1 V13.6 M14.9 7.3 H27.5" stroke="#111" stroke-width="1.1"/><circle cx="21.2" cy="7.3" r="1.4" fill="#111"/><circle cx="21.2" cy="7.3" r="0.6" fill="#fff"/><rect x="28.8" y="1" width="12.6" height="12.6" fill="#e30613"/><rect x="42.7" y="1" width="12.6" height="12.6" fill="#ffe500"/><rect x="56.6" y="1" width="12.6" height="12.6" fill="#009640"/><rect x="70.5" y="1" width="12.6" height="12.6" fill="#009fe3"/><rect x="84.4" y="1" width="12.6" height="12.6" fill="#312783"/><rect x="98.3" y="1" width="12.6" height="12.6" fill="#e6007e"/><rect x="112.2" y="1" width="12.6" height="12.6" fill="#c70d22"/><rect x="126.10000000000001" y="1" width="12.6" height="12.6" fill="#e53e2b"/><rect x="140.0" y="1" width="12.6" height="12.6" fill="#ea5b0c"/><rect x="153.9" y="1" width="12.6" height="12.6" fill="#f39200"/><rect x="167.8" y="1" width="12.6" height="12.6" fill="#f8ad3c"/><rect x="181.70000000000002" y="1" width="12.6" height="12.6" fill="#fbe22a"/><rect x="1.0" y="15" width="12.6" height="12.6" fill="#dedc00"/><rect x="14.9" y="15" width="12.6" height="12.6" fill="#95c11f"/><rect x="28.8" y="15" width="12.6" height="12.6" fill="#3aaa35"/><rect x="42.7" y="15" width="12.6" height="12.6" fill="#16983e"/><rect x="56.6" y="15" width="12.6" height="12.6" fill="#00703c"/><rect x="70.5" y="15" width="12.6" height="12.6" fill="#34ae6e"/><rect x="84.4" y="15" width="12.6" height="12.6" fill="#1aa09a"/><rect x="98.3" y="15" width="12.6" height="12.6" fill="#2daae1"/><rect x="112.2" y="15" width="12.6" height="12.6" fill="#1d71b8"/><rect x="126.10000000000001" y="15" width="12.6" height="12.6" fill="#2e3284"/><rect x="140.0" y="15" width="12.6" height="12.6" fill="#28276b"/><rect x="153.9" y="15" width="12.6" height="12.6" fill="#6a2c87"/><rect x="167.8" y="15" width="12.6" height="12.6" fill="#951b81"/><rect x="181.70000000000002" y="15" width="12.6" height="12.6" fill="#a81b5f"/><rect x="1.0" y="29" width="12.6" height="12.6" fill="#e1195b"/><rect x="14.9" y="29" width="12.6" height="12.6" fill="#e5197e"/><rect x="28.8" y="29" width="12.6" height="12.6" fill="#cbb89a"/><rect x="42.7" y="29" width="12.6" height="12.6" fill="#a48e7c"/><rect x="56.6" y="29" width="12.6" height="12.6" fill="#7f6d5f"/><rect x="70.5" y="29" width="12.6" height="12.6" fill="#5e4f44"/><rect x="84.4" y="29" width="12.6" height="12.6" fill="#c99d6a"/><rect x="98.3" y="29" width="12.6" height="12.6" fill="#b47e4b"/><rect x="112.2" y="29" width="12.6" height="12.6" fill="#9a6537"/><rect x="126.10000000000001" y="29" width="12.6" height="12.6" fill="#80522a"/><rect x="140.0" y="29" width="12.6" height="12.6" fill="#6b431b"/><rect x="153.9" y="29" width="12.6" height="12.6" fill="#4c3022"/><rect x="167.8" y="29" width="12.6" height="12.6" fill="url(#sg1)"/><rect x="181.70000000000002" y="29" width="12.6" height="12.6" fill="#0a0a0a"/><rect x="1.0" y="43" width="12.6" height="12.6" fill="url(#sr1)"/><rect x="14.9" y="43" width="12.6" height="12.6" fill="#0a0a0a"/><rect x="28.8" y="43" width="12.6" height="12.6" fill="url(#sg2)"/><rect x="42.7" y="43" width="12.6" height="12.6" fill="url(#sr2)"/><rect x="56.6" y="43" width="12.6" height="12.6" fill="#d84a1e"/><path d="M58.6 46 h6 M60.6 50 h7 M57.6 53 h5" stroke="#9a3a8a" stroke-width="1.2"/><rect x="70.5" y="43" width="12.6" height="12.6" fill="#0a0a0a"/><rect x="84.4" y="43" width="12.6" height="12.6" fill="#3c3c3b"/><rect x="98.3" y="43" width="12.6" height="12.6" fill="#575756"/><rect x="112.2" y="43" width="12.6" height="12.6" fill="#706f6f"/><rect x="126.10000000000001" y="43" width="12.6" height="12.6" fill="#878787"/><rect x="140.0" y="43" width="12.6" height="12.6" fill="#9d9d9c"/><rect x="153.9" y="43" width="12.6" height="12.6" fill="#b2b2b2"/><rect x="167.8" y="43" width="12.6" height="12.6" fill="#c6c6c6"/><rect x="181.70000000000002" y="43" width="12.6" height="12.6" fill="#dadada"/><rect x="1.0" y="57" width="12.6" height="12.6" fill="#ececec"/><rect x="14.9" y="57" width="12.6" height="12.6" fill="#f6f6f6"/><rect x="28.8" y="57" width="12.6" height="12.6" fill="#e30613"/><rect x="42.7" y="57" width="12.6" height="12.6" fill="#ec6608"/><rect x="56.6" y="57" width="12.6" height="12.6" fill="#fcd90a"/><rect x="70.5" y="57" width="12.6" height="12.6" fill="#12a042"/><rect x="84.4" y="57" width="12.6" height="12.6" fill="#273b8f"/><rect x="98.3" y="57" width="12.6" height="12.6" fill="#7b3190"/><rect x="0" y="71" width="27" height="14" fill="#fff"/><path d="M3 75 H7 L8 76 H13 V83 H3 Z" fill="#ddd" stroke="#777" stroke-width="0.8"/><rect x="27" y="71" width="14" height="14" fill="#0a0a0a"/><rect x="41.5" y="71.5" width="13" height="13" fill="#fff" stroke="#111"/><rect x="43.5" y="73.5" width="9" height="9" fill="#7b7b76" stroke="#222" stroke-width="0.8"/><rect x="55" y="71" width="14" height="14" fill="#3c3c3b"/><rect x="69" y="71" width="13.5" height="14" fill="#e53f2a"/><rect x="83" y="71" width="13.5" height="14" fill="#5b9947"/><rect x="0" y="84" width="197" height="2" fill="#0a0a0a"/></svg>
<div class="a" style="left:1345px;top:99px;width:16px;height:86px;background:linear-gradient(90deg,#e4e4e4,#f2f2f2)"></div>
<div class="a" style="left:1349px;top:110px;width:0;height:0;border-left:4px solid transparent;border-right:4px solid transparent;border-bottom:4px solid #999"></div>
<div class="a" style="left:1349px;top:173px;width:0;height:0;border-left:4px solid transparent;border-right:4px solid transparent;border-top:4px solid #999"></div>
<svg class="a" style="left:1147px;top:185px" width="214" height="17"><g transform="translate(10,1.5)"><rect x="0.5" y="0.5" width="8" height="7" fill="#ddd" stroke="#555" stroke-width="0.9"/><rect x="2.5" y="2.5" width="9" height="8" fill="#aaa" stroke="#222" stroke-width="1"/><path d="M5 3 V10 M8 3 V10 M3 5.8 H11 M3 8 H11" stroke="#eee" stroke-width="0.9"/><path d="M14 10.5 L17 7.5 V10.5 Z" fill="#111"/></g><g transform="translate(49,1.5)"><rect x="0.5" y="0.5" width="6" height="6" fill="#999" stroke="#222" stroke-width="0.9"/><rect x="3.5" y="3.5" width="6" height="6" fill="#444" stroke="#111" stroke-width="0.9"/><rect x="6.5" y="6.5" width="5" height="4" fill="#666" stroke="#111" stroke-width="0.9"/><path d="M15 10.5 L18 7.5 V10.5 Z" fill="#111"/></g><g transform="translate(82,2)"><rect x="0.5" y="0.5" width="11" height="9.5" fill="#bbb" stroke="#222" stroke-width="1.2"/><path d="M3 3.8 H9 M3 6.8 H9" stroke="#fff" stroke-width="1.2"/><path d="M1.5 3.8 H2.5 M9.5 3.8 H10.5 M1.5 6.8 H2.5 M9.5 6.8 H10.5" stroke="#222" stroke-width="1"/></g><g transform="translate(111,1)"><path d="M0.5 3.5 H4.5 L5.5 4.5 H11.5 V11.5 H0.5 Z" fill="#eee" stroke="#444" stroke-width="0.9"/><path d="M13 0.5 V6 M10.2 3.2 H15.8" stroke="#111" stroke-width="1.8"/></g><g transform="translate(146.5,2)"><rect x="0.5" y="0.5" width="9" height="9.5" fill="#fff" stroke="#222" stroke-width="1"/><path d="M9 1 V10 H1" fill="none" stroke="#111" stroke-width="2"/><rect x="3" y="4.5" width="3.5" height="3.5" fill="#fff" stroke="#333" stroke-width="0.8"/><path d="M3 4.5 L6.5 8" stroke="#333" stroke-width="0.7"/></g><g transform="translate(177,1.8)"><path d="M1.5 3.5 H8.5 L7.8 10.5 H2.2 Z" fill="#e8e8e8" stroke="#222" stroke-width="1.1"/><path d="M0.5 2.5 H9.5" stroke="#222" stroke-width="1.4"/><path d="M3 1.5 Q5 -0.5 7 1.5" fill="none" stroke="#222" stroke-width="1"/><path d="M3.8 4.5 V9.5 M6.2 4.5 V9.5" stroke="#222" stroke-width="0.9"/></g><g fill="#8a8a8a"><rect x="211" y="13" width="1.3" height="1.3"/><rect x="208" y="13" width="1.3" height="1.3"/><rect x="205" y="13" width="1.3" height="1.3"/><rect x="202" y="13" width="1.3" height="1.3"/><rect x="211" y="10" width="1.3" height="1.3"/><rect x="208" y="10" width="1.3" height="1.3"/><rect x="205" y="10" width="1.3" height="1.3"/><rect x="211" y="7" width="1.3" height="1.3"/><rect x="208" y="7" width="1.3" height="1.3"/><rect x="211" y="4" width="1.3" height="1.3"/></g></svg>
<div class="a" style="left:1147px;top:202px;width:214px;height:3px;background:#2c2c2c;border-top:1px solid #555"></div>
<div class="a" style="left:1147px;top:205px;width:214px;height:17px;background:linear-gradient(#9a9a9a,#8c8c8c);border-bottom:1px solid #707070"></div>
<div class="a" style="left:1147px;top:205px;width:41px;height:16px;background:linear-gradient(#a6a6a6,#929292);border-right:1px solid #6e6e6e;box-shadow:inset 1px 1px 0 #b4b4b4"></div>
<div class="t" style="left:1147px;width:41px;text-align:center;top:208px;font:bold 10px 'Liberation Sans';color:#2e2e2e;letter-spacing:-0.2px">Pinsel</div>
<div class="a" style="left:1188px;top:205px;width:57px;height:16px;background:linear-gradient(#a6a6a6,#929292);border-right:1px solid #6e6e6e;box-shadow:inset 1px 1px 0 #b4b4b4"></div>
<div class="t" style="left:1188px;width:57px;text-align:center;top:208px;font:bold 10px 'Liberation Sans';color:#2e2e2e;letter-spacing:-0.2px">Symbole</div>
<div class="a" style="left:1245px;top:205px;width:63px;height:17px;background:linear-gradient(#e8e8e8,#d8d8d8)"></div>
<div class="t" style="left:1245px;width:63px;text-align:center;top:208px;font:bold 10px 'Liberation Sans';color:#2e2e2e;letter-spacing:-0.2px">Grafikstile</div>
<svg class="a" style="left:1343px;top:209px" width="15" height="10"><path d="M0.5 2 L5 2 L2.75 5 Z" fill="#222"/><g fill="#1a1a1a"><rect x="6" y="0" width="8" height="1"/><rect x="6" y="2" width="8" height="1"/><rect x="6" y="4" width="8" height="1"/><rect x="6" y="6" width="8" height="1"/></g></svg>
<div class="a" style="left:1147px;top:222px;width:214px;height:155px;background:#d6d6d6"></div>
<div class="a" style="left:1148px;top:223px;width:196px;height:136px;background:#d6d6d6;border-top:1px solid #111;border-bottom:1px solid #111"></div>
<svg class="a" style="left:1148px;top:223px" width="194" height="34">
<rect x="0" y="0" width="193" height="33" fill="#111"/>
<g fill="#fff"><rect x="0" y="1" width="31" height="31"/><rect x="32.2" y="1" width="31" height="31"/><rect x="64.4" y="1" width="31" height="31"/><rect x="96.6" y="1" width="31" height="31"/><rect x="128.8" y="1" width="31" height="31"/><rect x="161" y="1" width="31" height="31"/></g>
<rect x="4.5" y="5.5" width="22" height="22" fill="#fff" stroke="#888"/><rect x="2.5" y="20.5" width="6" height="6" fill="#fff" stroke="#222"/><rect x="5" y="23" width="6" height="6" fill="#111"/><rect x="5.5" y="23.5" width="3" height="3" fill="#fff"/>
<rect x="40" y="8" width="15" height="15" rx="3" fill="#fafafa" stroke="#e6e6e6" stroke-width="2"/>
<rect x="69.5" y="5.5" width="22" height="22" rx="4" fill="#fff" stroke="#555"/><rect x="69.5" y="20.5" width="7" height="7" fill="#fff" stroke="#555"/><path d="M70 27 L76.5 20.5" stroke="#b0123b" stroke-width="2"/>
<rect x="101.5" y="10.5" width="11" height="12" fill="#fff" stroke="#888"/><rect x="112.5" y="10.5" width="11" height="12" fill="#fff" stroke="#888"/><rect x="101.5" y="20.5" width="7" height="7" fill="#fff" stroke="#555"/><path d="M102 27 L108.5 20.5" stroke="#b0123b" stroke-width="2"/>
<rect x="138" y="7" width="19" height="19" fill="#333"/>
<g><rect x="138" y="7" width="5" height="5" fill="#e6007e"/><rect x="143" y="12" width="5" height="5" fill="#ffe500"/><rect x="148" y="7" width="4" height="5" fill="#009fe3"/><rect x="152" y="17" width="5" height="5" fill="#e30613"/><rect x="138" y="17" width="5" height="5" fill="#009640"/><rect x="146" y="21" width="5" height="5" fill="#ffe500"/><rect x="152" y="10" width="5" height="4" fill="#e6007e"/></g>
<rect x="166" y="6" width="22" height="21" fill="#a9b89a" stroke="#8a9a7a"/>
</svg>
<div class="a" style="left:1345px;top:223px;width:16px;height:136px;background:linear-gradient(90deg,#e4e4e4,#f2f2f2)"></div>
<div class="a" style="left:1349px;top:233px;width:0;height:0;border-left:4px solid transparent;border-right:4px solid transparent;border-bottom:4px solid #999"></div>
<div class="a" style="left:1349px;top:350px;width:0;height:0;border-left:4px solid transparent;border-right:4px solid transparent;border-top:4px solid #999"></div>
<svg class="a" style="left:1147px;top:359px" width="214" height="18"><g transform="translate(12,3)"><rect x="0.5" y="0.5" width="8" height="7" fill="#ddd" stroke="#555" stroke-width="0.9"/><rect x="2.5" y="2.5" width="9" height="8" fill="#aaa" stroke="#222" stroke-width="1"/><path d="M5 3 V10 M8 3 V10 M3 5.8 H11 M3 8 H11" stroke="#eee" stroke-width="0.9"/><path d="M14 10.5 L17 7.5 V10.5 Z" fill="#111"/></g><g transform="translate(107,3)" fill="none" stroke="#888" stroke-width="1"><ellipse cx="7" cy="6" rx="6" ry="3"/><ellipse cx="15" cy="6" rx="6" ry="3"/><path d="M0 6 H22" stroke="#555"/><path d="M7 1 V3 M15 1 V3 M7 9 V11 M15 9 V11" stroke="#aaa"/></g><g transform="translate(147.5,3.5)"><rect x="0.5" y="0.5" width="9" height="9.5" fill="#fff" stroke="#222" stroke-width="1"/><path d="M9 1 V10 H1" fill="none" stroke="#111" stroke-width="2"/><rect x="3" y="4.5" width="3.5" height="3.5" fill="#fff" stroke="#333" stroke-width="0.8"/><path d="M3 4.5 L6.5 8" stroke="#333" stroke-width="0.7"/></g><g transform="translate(177,3)"><path d="M1.5 3.5 H8.5 L7.8 10.5 H2.2 Z" fill="#e8e8e8" stroke="#222" stroke-width="1.1"/><path d="M0.5 2.5 H9.5" stroke="#222" stroke-width="1.4"/><path d="M3 1.5 Q5 -0.5 7 1.5" fill="none" stroke="#222" stroke-width="1"/><path d="M3.8 4.5 V9.5 M6.2 4.5 V9.5" stroke="#222" stroke-width="0.9"/></g><g fill="#8a8a8a"><rect x="211" y="14" width="1.3" height="1.3"/><rect x="208" y="14" width="1.3" height="1.3"/><rect x="205" y="14" width="1.3" height="1.3"/><rect x="202" y="14" width="1.3" height="1.3"/><rect x="211" y="11" width="1.3" height="1.3"/><rect x="208" y="11" width="1.3" height="1.3"/><rect x="205" y="11" width="1.3" height="1.3"/><rect x="211" y="8" width="1.3" height="1.3"/><rect x="208" y="8" width="1.3" height="1.3"/><rect x="211" y="5" width="1.3" height="1.3"/></g></svg>
<div class="a" style="left:1147px;top:377px;width:214px;height:4px;background:#2c2c2c;border-top:1px solid #555"></div>
<div class="a" style="left:1147px;top:381px;width:214px;height:17px;background:linear-gradient(#9a9a9a,#8c8c8c);border-bottom:1px solid #707070"></div>
<div class="a" style="left:1147px;top:381px;width:47px;height:17px;background:linear-gradient(#e8e8e8,#d8d8d8)"></div>
<div class="t" style="left:1147px;width:47px;text-align:center;top:384px;font:bold 10px 'Liberation Sans';color:#2e2e2e;letter-spacing:-0.2px">Ebenen</div>
<div class="a" style="left:1194px;top:381px;width:51px;height:16px;background:linear-gradient(#a6a6a6,#929292);border-right:1px solid #6e6e6e;box-shadow:inset 1px 1px 0 #b4b4b4"></div>
<div class="t" style="left:1194px;width:51px;text-align:center;top:384px;font:bold 10px 'Liberation Sans';color:#2e2e2e;letter-spacing:-0.2px">Zeichen</div>
<div class="a" style="left:1245px;top:381px;width:45px;height:16px;background:linear-gradient(#a6a6a6,#929292);border-right:1px solid #6e6e6e;box-shadow:inset 1px 1px 0 #b4b4b4"></div>
<div class="t" style="left:1245px;width:45px;text-align:center;top:384px;font:bold 10px 'Liberation Sans';color:#2e2e2e;letter-spacing:-0.2px">Absatz</div>
<svg class="a" style="left:1343px;top:385px" width="15" height="10"><path d="M0.5 2 L5 2 L2.75 5 Z" fill="#222"/><g fill="#1a1a1a"><rect x="6" y="0" width="8" height="1"/><rect x="6" y="2" width="8" height="1"/><rect x="6" y="4" width="8" height="1"/><rect x="6" y="6" width="8" height="1"/></g></svg>
<div class="a" style="left:1147px;top:398px;width:214px;height:116px;background:#d6d6d6"></div>
<div class="a" style="left:1148px;top:398px;width:196px;height:102px;background:#fff;border-top:1px solid #111;border-bottom:1px solid #111"></div>
<div class="a" style="left:1148px;top:399px;width:45px;height:100px;background:#d6d6d6;border-right:1px solid #555"></div>
<div class="a" style="left:1149px;top:400px;width:18px;height:18px;background:#ddd;border:1px solid #c8c8c8;box-shadow:inset 1px 1px 0 #f0f0f0"></div>
<div class="a" style="left:1168px;top:400px;width:16px;height:18px;background:#ddd;border:1px solid #c8c8c8;box-shadow:inset 1px 1px 0 #f0f0f0"></div>
<div class="a" style="left:1185px;top:401px;width:4px;height:16px;background:#1b8a50"></div>
<div class="a" style="left:1148px;top:418px;width:45px;height:1px;background:#b8b8b8"></div>
<svg class="a" style="left:1151px;top:403px" width="14" height="12"><path d="M1 6 Q7 0 13 6 Q7 12 1 6 Z" fill="#f4f4f4" stroke="#111" stroke-width="1"/><path d="M2 7 Q7 11.5 12 7" fill="none" stroke="#111" stroke-width="0.7"/><circle cx="7" cy="5.8" r="2.6" fill="#111"/><circle cx="6.1" cy="5" r="0.8" fill="#fff"/></svg>
<div class="a" style="left:1149px;top:420px;width:18px;height:18px;background:#ddd;border:1px solid #c8c8c8;box-shadow:inset 1px 1px 0 #f0f0f0"></div>
<div class="a" style="left:1168px;top:420px;width:16px;height:18px;background:#ddd;border:1px solid #c8c8c8;box-shadow:inset 1px 1px 0 #f0f0f0"></div>
<div class="a" style="left:1185px;top:421px;width:4px;height:16px;background:#1b8a50"></div>
<div class="a" style="left:1148px;top:438px;width:45px;height:1px;background:#b8b8b8"></div>
<svg class="a" style="left:1151px;top:423px" width="14" height="12"><path d="M1 6 Q7 0 13 6 Q7 12 1 6 Z" fill="#f4f4f4" stroke="#111" stroke-width="1"/><path d="M2 7 Q7 11.5 12 7" fill="none" stroke="#111" stroke-width="0.7"/><circle cx="7" cy="5.8" r="2.6" fill="#111"/><circle cx="6.1" cy="5" r="0.8" fill="#fff"/></svg>
<div class="a" style="left:1149px;top:440px;width:18px;height:18px;background:#ddd;border:1px solid #c8c8c8;box-shadow:inset 1px 1px 0 #f0f0f0"></div>
<div class="a" style="left:1168px;top:440px;width:16px;height:18px;background:#ddd;border:1px solid #c8c8c8;box-shadow:inset 1px 1px 0 #f0f0f0"></div>
<div class="a" style="left:1185px;top:441px;width:4px;height:16px;background:#1b8a50"></div>
<div class="a" style="left:1148px;top:458px;width:45px;height:1px;background:#b8b8b8"></div>
<svg class="a" style="left:1151px;top:443px" width="14" height="12"><path d="M1 6 Q7 0 13 6 Q7 12 1 6 Z" fill="#f4f4f4" stroke="#111" stroke-width="1"/><path d="M2 7 Q7 11.5 12 7" fill="none" stroke="#111" stroke-width="0.7"/><circle cx="7" cy="5.8" r="2.6" fill="#111"/><circle cx="6.1" cy="5" r="0.8" fill="#fff"/></svg>
<svg class="a" style="left:1170px;top:442px" width="12" height="14"><path d="M3 7 V4.5 A3 3 0 0 1 9 4.5 V7" fill="none" stroke="#222" stroke-width="1.4"/><rect x="1.5" y="7" width="9" height="6" fill="#333"/></svg>
<div class="a" style="left:1149px;top:460px;width:18px;height:18px;background:#ddd;border:1px solid #c8c8c8;box-shadow:inset 1px 1px 0 #f0f0f0"></div>
<div class="a" style="left:1168px;top:460px;width:16px;height:18px;background:#ddd;border:1px solid #c8c8c8;box-shadow:inset 1px 1px 0 #f0f0f0"></div>
<div class="a" style="left:1185px;top:461px;width:4px;height:16px;background:#1b8a50"></div>
<div class="a" style="left:1148px;top:478px;width:45px;height:1px;background:#b8b8b8"></div>
<div class="a" style="left:1149px;top:480px;width:18px;height:18px;background:#ddd;border:1px solid #c8c8c8;box-shadow:inset 1px 1px 0 #f0f0f0"></div>
<div class="a" style="left:1168px;top:480px;width:16px;height:18px;background:#ddd;border:1px solid #c8c8c8;box-shadow:inset 1px 1px 0 #f0f0f0"></div>
<div class="a" style="left:1185px;top:481px;width:4px;height:16px;background:#e96a1e"></div>
<div class="a" style="left:1148px;top:498px;width:45px;height:1px;background:#b8b8b8"></div>
<svg class="a" style="left:1151px;top:483px" width="14" height="12"><path d="M1 6 Q7 0 13 6 Q7 12 1 6 Z" fill="#f4f4f4" stroke="#111" stroke-width="1"/><path d="M2 7 Q7 11.5 12 7" fill="none" stroke="#111" stroke-width="0.7"/><circle cx="7" cy="5.8" r="2.6" fill="#111"/><circle cx="6.1" cy="5" r="0.8" fill="#fff"/></svg>
<svg class="a" style="left:1170px;top:482px" width="12" height="14"><path d="M3 7 V4.5 A3 3 0 0 1 9 4.5 V7" fill="none" stroke="#222" stroke-width="1.4"/><rect x="1.5" y="7" width="9" height="6" fill="#333"/></svg>
<div class="a" style="left:1194px;top:399px;width:150px;height:20px;background:#e8e8e8"></div>
<div class="a" style="left:1209px;top:399px;width:135px;height:20px;background:#3d97f0"></div>
<svg class="a" style="left:1196px;top:404px" width="12" height="9"><path d="M1 1 H11 L6 8 Z" fill="#f0f0f0" stroke="#999"/></svg>
<div class="a" style="left:1210px;top:400px;width:18px;height:18px;background:#fff;border:1px solid #222"></div>
<div class="a" style="left:1215px;top:405px;width:8px;height:8px;background:#5f9444"></div>
<div class="t" style="left:1231px;top:403px;font:bold 10.5px 'Liberation Sans';color:#fff">Meine Ebene</div>
<svg class="a" style="left:1319px;top:403px" width="12" height="12"><circle cx="6" cy="6" r="4.5" fill="none" stroke="#1a3a6a" stroke-width="1.2"/></svg>
<div class="a" style="left:1335px;top:406px;width:5px;height:5px;background:#109850"></div>
<svg class="a" style="left:1337px;top:399px" width="7" height="7"><path d="M0 0 H7 V7 Z" fill="#111"/></svg>
<div class="a" style="left:1226px;top:420px;width:17px;height:18px;background:#5f9444;border:1px solid #111;box-shadow:inset 0 0 0 1px #e0e0e0"></div>
<div class="t" style="left:1247px;top:423px;font-size:10.5px;color:#111">&lt;Pfad&gt;</div>
<svg class="a" style="left:1317px;top:421px" width="15" height="15"><circle cx="7.5" cy="7.5" r="6.2" fill="url(#gball2)" stroke="#222" stroke-width="1.1"/><circle cx="7.5" cy="7.5" r="3.6" fill="#888" stroke="#eee" stroke-width="0.8"/><defs><radialGradient id="gball2" cx="0.4" cy="0.35" r="0.7"><stop offset="0" stop-color="#fff"/><stop offset="1" stop-color="#666"/></radialGradient></defs></svg>
<div class="a" style="left:1334px;top:424px;width:8px;height:8px;background:#109850;border:1px solid #111"></div>
<div class="a" style="left:1224px;top:439px;width:120px;height:1px;background:#c8c8c8"></div>
<div class="a" style="left:1226px;top:440px;width:17px;height:18px;background:#eeebe2;border:1px solid #111;box-shadow:inset 0 0 0 1px #fff"></div>
<div class="t" style="left:1246px;top:443px;font-size:10.5px;color:#111">Hintergrund</div>
<svg class="a" style="left:1319px;top:443px" width="12" height="12"><defs><radialGradient id="gb3" cx="0.4" cy="0.35" r="0.7"><stop offset="0" stop-color="#eee"/><stop offset="1" stop-color="#333"/></radialGradient></defs><circle cx="6" cy="6" r="4.8" fill="url(#gb3)" stroke="#444" stroke-width="0.8"/></svg>
<div class="a" style="left:1224px;top:459px;width:120px;height:1px;background:#c8c8c8"></div>
<div class="a" style="left:1226px;top:460px;width:17px;height:18px;background:#e8601a;border:1px solid #111;box-shadow:inset 0 0 0 1px #fff"></div>
<div class="t" style="left:1247px;top:463px;font-size:10.5px;color:#111">&lt;Pfad&gt;</div>
<svg class="a" style="left:1319px;top:463px" width="12" height="12"><circle cx="6" cy="6" r="4.6" fill="#fff" stroke="#333" stroke-width="1"/></svg>
<div class="a" style="left:1194px;top:479px;width:150px;height:20px;background:#dcdcdc"></div>
<svg class="a" style="left:1197px;top:483px" width="9" height="13"><path d="M1 1 V12 L8 6.5 Z" fill="#f0f0f0" stroke="#999"/></svg>
<div class="a" style="left:1211px;top:480px;width:17px;height:18px;background:#fff;border:1px solid #111"></div>
<div class="t" style="left:1231px;top:483px;font-size:10.5px;color:#111">Vorlage</div>
<svg class="a" style="left:1319px;top:483px" width="12" height="12"><circle cx="6" cy="6" r="4.6" fill="#e6e6e6" stroke="#555" stroke-width="1"/></svg>
<div class="a" style="left:1345px;top:399px;width:16px;height:100px;background:linear-gradient(90deg,#e4e4e4,#f2f2f2)"></div>
<div class="a" style="left:1349px;top:408px;width:0;height:0;border-left:4px solid transparent;border-right:4px solid transparent;border-bottom:4px solid #999"></div>
<div class="a" style="left:1349px;top:490px;width:0;height:0;border-left:4px solid transparent;border-right:4px solid transparent;border-top:4px solid #999"></div>
<div class="t" style="left:1157px;top:501px;font-size:10.5px;color:#111">2 Ebenen</div>
<svg class="a" style="left:1147px;top:499px" width="214" height="15"><g transform="translate(81,2)"><rect x="0.5" y="0.5" width="7" height="7" fill="#fff" stroke="#555" stroke-width="0.9" stroke-dasharray="1 1"/><circle cx="8" cy="7" r="4.2" fill="#eee" stroke="#222" stroke-width="1.1"/><path d="M8 7 V3.5 M8 7 L10.5 9" stroke="#222" stroke-width="1"/></g><g transform="translate(101,3)"><path d="M0 4.5 H5 M3.5 2.5 L5.5 4.5 L3.5 6.5" fill="none" stroke="#111" stroke-width="1.2"/><rect x="6.5" y="0.5" width="7" height="9" fill="#fff" stroke="#222"/><path d="M13 1 V10 H7" fill="none" stroke="#111" stroke-width="1.8"/><rect x="8.5" y="4.5" width="2.5" height="3" fill="#555"/></g><g transform="translate(142.5,3)"><rect x="0.5" y="0.5" width="9" height="9.5" fill="#fff" stroke="#222" stroke-width="1"/><path d="M9 1 V10 H1" fill="none" stroke="#111" stroke-width="2"/><rect x="3" y="4.5" width="3.5" height="3.5" fill="#fff" stroke="#333" stroke-width="0.8"/><path d="M3 4.5 L6.5 8" stroke="#333" stroke-width="0.7"/></g><g transform="translate(172,2)"><path d="M1.5 3.5 H8.5 L7.8 10.5 H2.2 Z" fill="#e8e8e8" stroke="#222" stroke-width="1.1"/><path d="M0.5 2.5 H9.5" stroke="#222" stroke-width="1.4"/><path d="M3 1.5 Q5 -0.5 7 1.5" fill="none" stroke="#222" stroke-width="1"/><path d="M3.8 4.5 V9.5 M6.2 4.5 V9.5" stroke="#222" stroke-width="0.9"/></g><g fill="#8a8a8a"><rect x="211" y="11" width="1.3" height="1.3"/><rect x="208" y="11" width="1.3" height="1.3"/><rect x="205" y="11" width="1.3" height="1.3"/><rect x="202" y="11" width="1.3" height="1.3"/><rect x="211" y="8" width="1.3" height="1.3"/><rect x="208" y="8" width="1.3" height="1.3"/><rect x="205" y="8" width="1.3" height="1.3"/><rect x="211" y="5" width="1.3" height="1.3"/><rect x="208" y="5" width="1.3" height="1.3"/><rect x="211" y="2" width="1.3" height="1.3"/></g></svg>
<div class="a" style="left:1147px;top:514px;width:214px;height:4px;background:#2c2c2c;border-top:1px solid #555"></div>
<div class="a" style="left:1147px;top:518px;width:214px;height:19px;background:linear-gradient(#9a9a9a,#8c8c8c);border-bottom:1px solid #707070"></div>
<div class="a" style="left:1147px;top:518px;width:58px;height:19px;background:linear-gradient(#e8e8e8,#d8d8d8)"></div>
<div class="t" style="left:1147px;width:58px;text-align:center;top:521px;font:bold 10px 'Liberation Sans';color:#2e2e2e;letter-spacing:-0.2px">Aussehen</div>
<div class="a" style="left:1205px;top:518px;width:49px;height:18px;background:linear-gradient(#a6a6a6,#929292);border-right:1px solid #6e6e6e;box-shadow:inset 1px 1px 0 #b4b4b4"></div>
<div class="t" style="left:1205px;width:49px;text-align:center;top:521px;font:bold 10px 'Liberation Sans';color:#2e2e2e;letter-spacing:-0.2px">Verlauf</div>
<div class="a" style="left:1254px;top:518px;width:67px;height:18px;background:linear-gradient(#a6a6a6,#929292);border-right:1px solid #6e6e6e;box-shadow:inset 1px 1px 0 #b4b4b4"></div>
<div class="t" style="left:1254px;width:67px;text-align:center;top:521px;font:bold 10px 'Liberation Sans';color:#2e2e2e;letter-spacing:-0.2px">Transparenz</div>
<svg class="a" style="left:1343px;top:522px" width="15" height="10"><path d="M0.5 2 L5 2 L2.75 5 Z" fill="#222"/><g fill="#1a1a1a"><rect x="6" y="0" width="8" height="1"/><rect x="6" y="2" width="8" height="1"/><rect x="6" y="4" width="8" height="1"/><rect x="6" y="6" width="8" height="1"/></g></svg>
<div class="a" style="left:1147px;top:537px;width:214px;height:164px;background:#d6d6d6"></div>
<div class="a" style="left:1148px;top:537px;width:197px;height:145px;background:#dcdcdc;border-top:1px solid #111;border-bottom:1px solid #111"></div>
<div class="a" style="left:1148px;top:538px;width:23px;height:143px;background:#d6d6d6;border-right:1px solid #444"></div>
<div class="a" style="left:1150px;top:539px;width:19px;height:22px;background:#dedede;border:1px solid #c4c4c4;box-shadow:inset 1px 1px 0 #f4f4f4"></div>
<svg class="a" style="left:1152px;top:544px" width="15" height="12"><path d="M1 6 Q7.5 0 14 6 Q7.5 12 1 6 Z" fill="#f4f4f4" stroke="#111" stroke-width="1"/><path d="M2 7 Q7.5 11.5 13 7" fill="none" stroke="#111" stroke-width="0.7"/><circle cx="7.5" cy="5.8" r="2.6" fill="#111"/><circle cx="6.6" cy="5" r="0.8" fill="#fff"/></svg>
<div class="a" style="left:1150px;top:563px;width:19px;height:22px;background:#dedede;border:1px solid #c4c4c4;box-shadow:inset 1px 1px 0 #f4f4f4"></div>
<svg class="a" style="left:1152px;top:568px" width="15" height="12"><path d="M1 6 Q7.5 0 14 6 Q7.5 12 1 6 Z" fill="#f4f4f4" stroke="#111" stroke-width="1"/><path d="M2 7 Q7.5 11.5 13 7" fill="none" stroke="#111" stroke-width="0.7"/><circle cx="7.5" cy="5.8" r="2.6" fill="#111"/><circle cx="6.6" cy="5" r="0.8" fill="#fff"/></svg>
<div class="a" style="left:1150px;top:587px;width:19px;height:22px;background:#dedede;border:1px solid #c4c4c4;box-shadow:inset 1px 1px 0 #f4f4f4"></div>
<svg class="a" style="left:1152px;top:592px" width="15" height="12"><path d="M1 6 Q7.5 0 14 6 Q7.5 12 1 6 Z" fill="#f4f4f4" stroke="#111" stroke-width="1"/><path d="M2 7 Q7.5 11.5 13 7" fill="none" stroke="#111" stroke-width="0.7"/><circle cx="7.5" cy="5.8" r="2.6" fill="#111"/><circle cx="6.6" cy="5" r="0.8" fill="#fff"/></svg>
<div class="a" style="left:1150px;top:611px;width:19px;height:22px;background:#dedede;border:1px solid #c4c4c4;box-shadow:inset 1px 1px 0 #f4f4f4"></div>
<svg class="a" style="left:1152px;top:616px" width="15" height="12"><path d="M1 6 Q7.5 0 14 6 Q7.5 12 1 6 Z" fill="#f4f4f4" stroke="#111" stroke-width="1"/><path d="M2 7 Q7.5 11.5 13 7" fill="none" stroke="#111" stroke-width="0.7"/><circle cx="7.5" cy="5.8" r="2.6" fill="#111"/><circle cx="6.6" cy="5" r="0.8" fill="#fff"/></svg>
<div class="a" style="left:1150px;top:635px;width:19px;height:22px;background:#dedede;border:1px solid #c4c4c4;box-shadow:inset 1px 1px 0 #f4f4f4"></div>
<svg class="a" style="left:1152px;top:640px" width="15" height="12"><path d="M1 6 Q7.5 0 14 6 Q7.5 12 1 6 Z" fill="#f4f4f4" stroke="#999" stroke-width="1"/><path d="M2 7 Q7.5 11.5 13 7" fill="none" stroke="#999" stroke-width="0.7"/><circle cx="7.5" cy="5.8" r="2.6" fill="#999"/><circle cx="6.6" cy="5" r="0.8" fill="#fff"/></svg>
<div class="a" style="left:1150px;top:659px;width:19px;height:22px;background:#dedede;border:1px solid #c4c4c4;box-shadow:inset 1px 1px 0 #f4f4f4"></div>
<svg class="a" style="left:1152px;top:664px" width="15" height="12"><path d="M1 6 Q7.5 0 14 6 Q7.5 12 1 6 Z" fill="#f4f4f4" stroke="#999" stroke-width="1"/><path d="M2 7 Q7.5 11.5 13 7" fill="none" stroke="#999" stroke-width="0.7"/><circle cx="7.5" cy="5.8" r="2.6" fill="#999"/><circle cx="6.6" cy="5" r="0.8" fill="#fff"/></svg>
<div class="a" style="left:1172px;top:538px;width:172px;height:24px;background:#dcdcdc;border-bottom:1px solid #ececec"></div>
<div class="a" style="left:1172px;top:562px;width:172px;height:24px;background:#dcdcdc;border-bottom:1px solid #ececec"></div>
<div class="a" style="left:1172px;top:586px;width:172px;height:24px;background:#dcdcdc"></div>
<div class="a" style="left:1172px;top:610px;width:172px;height:24px;background:#3d97f0"></div>
<div class="a" style="left:1172px;top:634px;width:172px;height:24px;background:#fff"></div>
<div class="a" style="left:1172px;top:658px;width:172px;height:23px;background:#dcdcdc"></div>
<svg class="a" style="left:1173px;top:545px" width="9" height="12"><path d="M1.5 1 L7.5 6 L1.5 11 Z" fill="none" stroke="#111" stroke-width="1.6"/></svg>
<div class="t" style="left:1184px;top:545px;font-size:10.5px;color:#2424c8;border-bottom:1px dotted #2424c8;padding-bottom:1px">Kontur:</div>
<svg class="a" style="left:1228px;top:540px" width="20" height="19"><rect x="0.5" y="0.5" width="19" height="18" fill="#fff" stroke="#111"/><rect x="2.5" y="2.5" width="15" height="14" fill="#fff" stroke="#333"/><path d="M3 16 L17 3" stroke="#b0123b" stroke-width="2"/></svg>
<svg class="a" style="left:1173px;top:569px" width="9" height="12"><path d="M1.5 1 L7.5 6 L1.5 11 Z" fill="none" stroke="#111" stroke-width="1.6"/></svg>
<div class="t" style="left:1183px;top:569px;font-size:10.5px;color:#111">Fläche:</div>
<div class="a" style="left:1229px;top:565px;width:18px;height:18px;background:#5f9444;border:1px solid #555"></div>
<svg class="a" style="left:1172px;top:594px" width="11" height="9"><path d="M1 1.5 H10 L5.5 7.5 Z" fill="none" stroke="#111" stroke-width="1.6"/></svg>
<div class="t" style="left:1183px;top:593px;font-size:10.5px;color:#111">Fläche:</div>
<svg class="a" style="left:1228px;top:589px" width="20" height="19"><rect x="0.5" y="0.5" width="19" height="18" fill="#fff" stroke="#111"/><rect x="2.5" y="2.5" width="15" height="14" fill="#7b7b74" stroke="#333"/></svg>
<div class="t" style="left:1194px;top:617px;font-size:10px;color:#fff;border-bottom:1px solid #cfe6ff;padding-bottom:1px">Transformieren</div>
<div class="t" style="left:1326px;top:615px;font:italic bold 12px 'Liberation Serif';color:#1a3a5a">fx</div>
<div class="t" style="left:1194px;top:641px;font-size:10.5px;color:#2424c8;border-bottom:1px dotted #2424c8;padding-bottom:1px">Deckkraft:</div>
<div class="t" style="left:1248px;top:641px;font-size:10.5px;color:#111">Standard</div>
<div class="t" style="left:1184px;top:665px;font-size:10.5px;color:#2424c8;border-bottom:1px dotted #2424c8;padding-bottom:1px">Deckkraft:</div>
<div class="t" style="left:1238px;top:665px;font-size:10.5px;color:#111">Standard</div>
<div class="a" style="left:1168px;top:585px;width:178px;height:50px;border:4px solid #e4101a;border-radius:2px"></div>
<div class="a" style="left:1346px;top:538px;width:14px;height:143px;background:linear-gradient(90deg,#e4e4e4,#f2f2f2)"></div>
<div class="a" style="left:1349px;top:546px;width:0;height:0;border-left:4px solid transparent;border-right:4px solid transparent;border-bottom:4px solid #333"></div>
<div class="a" style="left:1349px;top:674px;width:0;height:0;border-left:4px solid transparent;border-right:4px solid transparent;border-top:4px solid #333"></div>
<div class="a" style="left:1346px;top:651px;width:14px;height:14px;background:linear-gradient(90deg,#e8e8e8,#fafafa);border:1px solid #aaa;border-radius:2px"></div>
<svg class="a" style="left:1147px;top:682px" width="214" height="19"><rect x="13" y="4" width="10" height="10" fill="#444"/><rect x="16" y="7" width="4" height="4" fill="#bbb"/><rect x="47.5" y="4.5" width="10" height="10" fill="#fff" stroke="#333"/><text x="77" y="14" font-family="Liberation Serif" font-style="italic" font-weight="bold" font-size="13" fill="#222">fx</text><path d="M92 15 L95 12 V15 Z" fill="#111"/><circle cx="118" cy="9.5" r="4.5" fill="#f4f4f4" stroke="#333" stroke-width="1.4"/><path d="M115 6.5 L121 12.5" stroke="#333" stroke-width="1.5"/><g transform="translate(146,4.5)"><rect x="0.5" y="0.5" width="9" height="9.5" fill="#fff" stroke="#222" stroke-width="1"/><path d="M9 1 V10 H1" fill="none" stroke="#111" stroke-width="2"/><rect x="3" y="4.5" width="3.5" height="3.5" fill="#fff" stroke="#333" stroke-width="0.8"/><path d="M3 4.5 L6.5 8" stroke="#333" stroke-width="0.7"/></g><g transform="translate(176,4)"><path d="M1.5 3.5 H8.5 L7.8 10.5 H2.2 Z" fill="#e8e8e8" stroke="#222" stroke-width="1.1"/><path d="M0.5 2.5 H9.5" stroke="#222" stroke-width="1.4"/><path d="M3 1.5 Q5 -0.5 7 1.5" fill="none" stroke="#222" stroke-width="1"/><path d="M3.8 4.5 V9.5 M6.2 4.5 V9.5" stroke="#222" stroke-width="0.9"/></g></svg>
<div class="a" style="left:1219px;top:680px;width:31px;height:21px;border:4px solid #e4101a;border-radius:2px"></div>
<div class="a" style="left:1286px;top:680px;width:25px;height:21px;border:4px solid #e4101a;border-radius:2px"></div>
<div class="a" style="left:1147px;top:701px;width:214px;height:3px;background:#2c2c2c;border-top:1px solid #555"></div>
<div class="a" style="left:1147px;top:704px;width:214px;height:18px;background:linear-gradient(#9a9a9a,#8c8c8c);border-bottom:1px solid #707070"></div>
<div class="a" style="left:1147px;top:704px;width:73px;height:18px;background:linear-gradient(#e8e8e8,#d8d8d8)"></div>
<div class="t" style="left:1147px;width:73px;text-align:center;top:706px;font:bold 10px 'Liberation Sans';color:#2e2e2e;letter-spacing:-0.2px">&nbsp;&nbsp;&nbsp;Ausrichten</div>
<div class="a" style="left:1220px;top:704px;width:65px;height:17px;background:linear-gradient(#a6a6a6,#929292);border-right:1px solid #6e6e6e;box-shadow:inset 1px 1px 0 #b4b4b4"></div>
<div class="t" style="left:1220px;width:65px;text-align:center;top:706px;font:bold 10px 'Liberation Sans';color:#2e2e2e;letter-spacing:-0.2px">Pathfinder</div>
<svg class="a" style="left:1343px;top:708px" width="15" height="10"><path d="M0.5 2 L5 2 L2.75 5 Z" fill="#222"/><g fill="#1a1a1a"><rect x="6" y="0" width="8" height="1"/><rect x="6" y="2" width="8" height="1"/><rect x="6" y="4" width="8" height="1"/><rect x="6" y="6" width="8" height="1"/></g></svg>
<svg class="a" style="left:1151px;top:709px" width="8" height="10"><path d="M1 4 L4 1 L7 4 M1 6 L4 9 L7 6" fill="none" stroke="#222" stroke-width="1.3"/></svg>

</body></html>
